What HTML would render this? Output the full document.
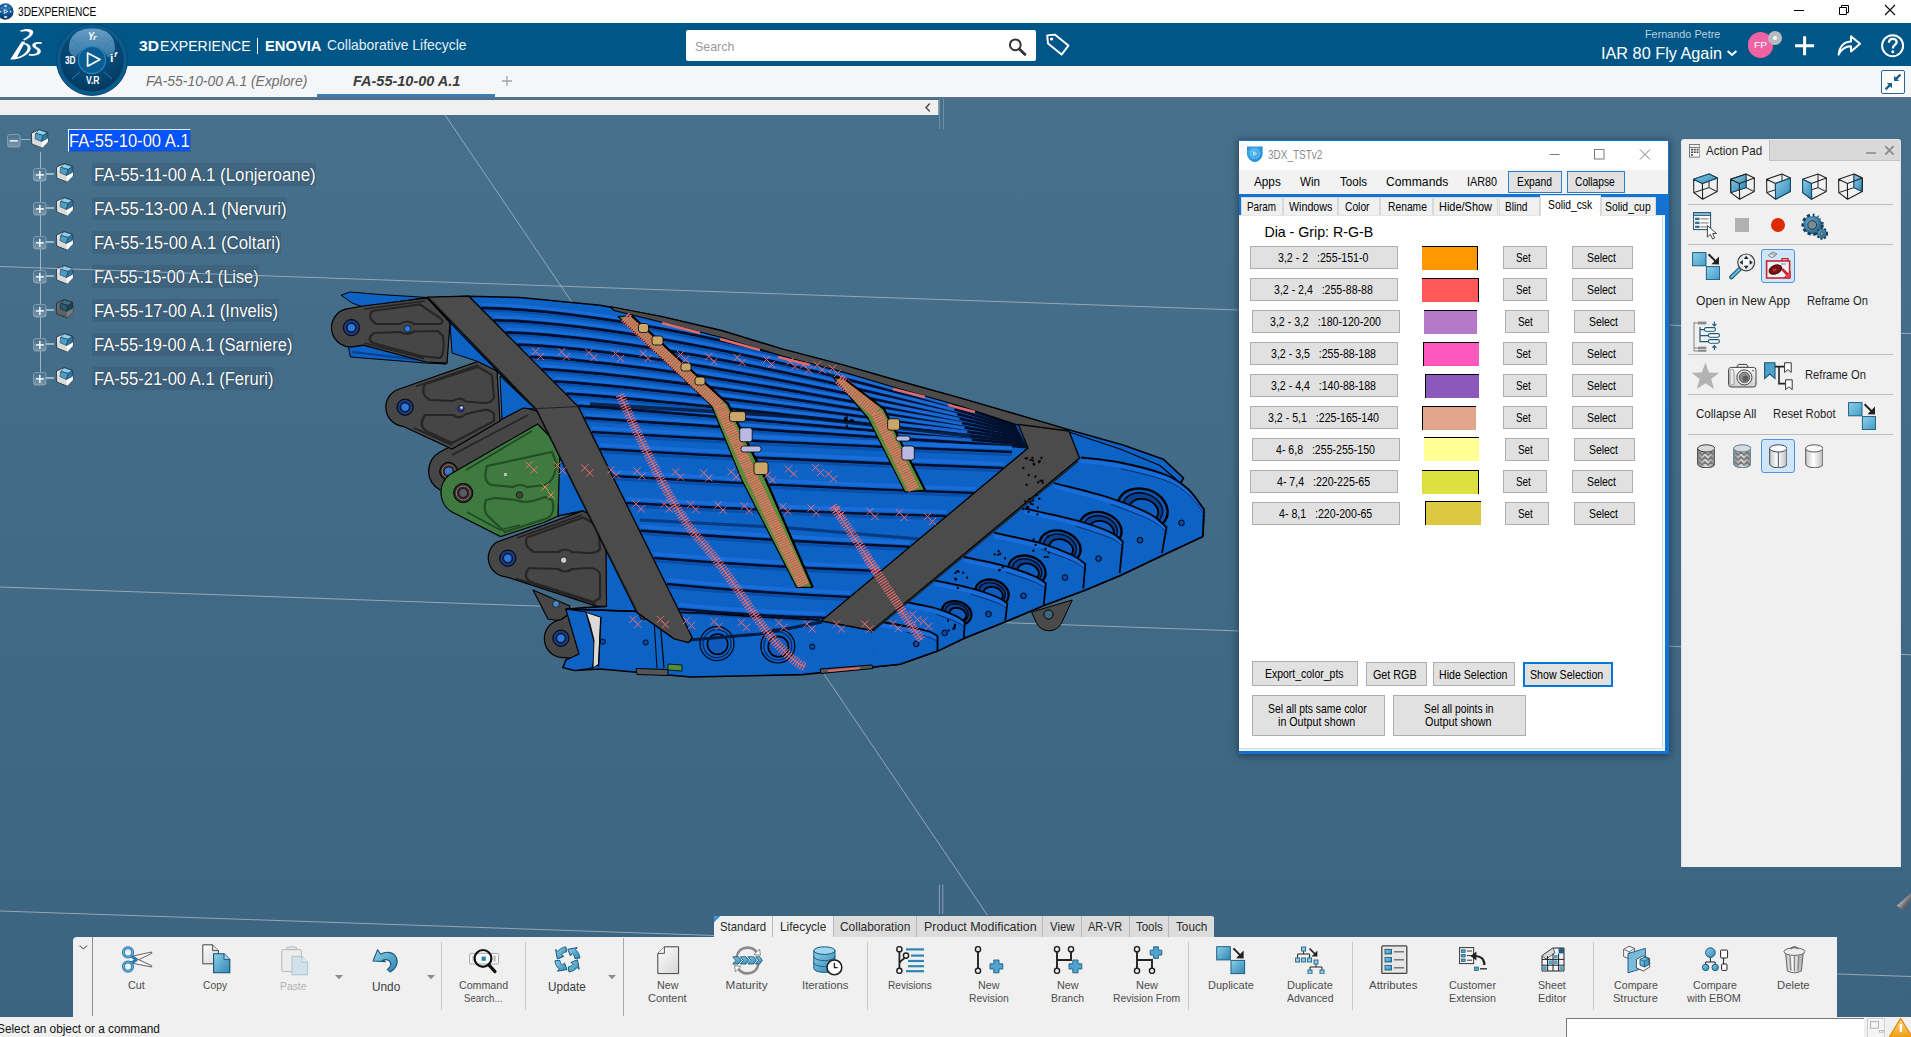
<!DOCTYPE html>
<html><head><meta charset="utf-8">
<style>
*{box-sizing:border-box;margin:0;padding:0}
html,body{width:1911px;height:1037px;overflow:hidden;background:#fff;font-family:"Liberation Sans",sans-serif;}
#root{position:relative;width:1911px;height:1037px;overflow:hidden;background:#fff}
</style></head><body>
<div id="root">
<!-- view -->
<div style="position:absolute;left:0px;top:98px;width:1911px;height:919px;background:linear-gradient(#47708c,#3c6480);"></div>
<div style="position:absolute;left:0px;top:99.6px;width:939px;height:15px;background:#f0f0f0;border-right:1px solid #8a9aa6;"></div>
<div style="position:absolute;left:942.6px;top:98px;width:1.2px;height:31px;background:#6f8fa6;"></div>
<div style="position:absolute;left:939px;top:98px;width:1.2px;height:31px;background:#6f8fa6;"></div>
<svg style="position:absolute;left:923px;top:102px" width="10" height="11" viewBox="0 0 10 11"><path d="M6.8 1.4 L3 5.5 L6.8 9.6" fill="none" stroke="#4a4a4a" stroke-width="1.4"/></svg>
<div style="position:absolute;left:0px;top:1017px;width:1911px;height:20px;background:#f0f0f0;"></div>
<span style="position:absolute;left:-3.0px;top:1022.8px;font-size:12px;line-height:1;color:#111;white-space:pre;transform-origin:0 0;transform:scaleX(0.985);">Select an object or a command</span>
<!-- tree -->
<div style="position:absolute;left:40px;top:152px;width:1.2px;height:16px;background:#9fb6c6;"></div>
<div style="position:absolute;left:40px;top:181.1px;width:1.2px;height:20.9px;background:#9fb6c6;"></div>
<div style="position:absolute;left:40px;top:215.1px;width:1.2px;height:20.9px;background:#9fb6c6;"></div>
<div style="position:absolute;left:40px;top:249.1px;width:1.2px;height:20.9px;background:#9fb6c6;"></div>
<div style="position:absolute;left:40px;top:283.1px;width:1.2px;height:20.9px;background:#9fb6c6;"></div>
<div style="position:absolute;left:40px;top:317.1px;width:1.2px;height:20.9px;background:#9fb6c6;"></div>
<div style="position:absolute;left:40px;top:351.1px;width:1.2px;height:20.9px;background:#9fb6c6;"></div>
<div style="position:absolute;left:21px;top:139.2px;width:9px;height:1.2px;background:#9fb6c6;"></div>
<svg style="position:absolute;left:7px;top:134px" width="14" height="14" viewBox="0 0 14 14"><defs><linearGradient id="pmg" x1="0" y1="0" x2="0" y2="1"><stop offset="0" stop-color="#fff" stop-opacity="0"/><stop offset="1" stop-color="#fff" stop-opacity="0.28"/></linearGradient></defs><rect x="0.6" y="0.6" width="12.4" height="12.4" rx="2" fill="url(#pmg)" stroke="#9db4c4" stroke-width="0.9" stroke-opacity="0.8"/><path d="M2.8 6.9 H10.9" stroke="#fff" stroke-width="1.4"/></svg>
<svg style="position:absolute;left:31px;top:128.8px" width="18" height="20" viewBox="0 0 18 20"><path d="M0.5 4.2 L8.1 0.5 L16.7 3.4 L16.9 12.9 L11.1 18.9 L0.8 14.9 Z" fill="#ececec" stroke="#16242e" stroke-width="0.8"/><path d="M10.4 12.6 L16.9 8.6 L16.9 12.9 L11.1 18.9 Z" fill="#ffffff"/><path d="M2.6 3.4 L4.7 4.4 L4.1 9.9 L10.4 12.6 L11 18.6 L2.2 15 Z" fill="#c9cdd0" opacity="0.55"/><path d="M8.1 0.8 L16.3 3.5 L12.2 6.4 L4.7 4.4 Z" fill="#8fd0ee" stroke="#12384f" stroke-width="0.6" stroke-linejoin="round"/><path d="M4.7 4.4 L12.2 6.4 L10.5 12.5 L4.1 9.8 Z" fill="#4f9cc4" stroke="#12384f" stroke-width="0.6" stroke-linejoin="round"/><path d="M12.2 6.4 L16.3 3.5 L16.3 9.4 L10.5 12.5 Z" fill="#2f7ba6" stroke="#12384f" stroke-width="0.6" stroke-linejoin="round"/></svg>
<div style="position:absolute;left:67.9px;top:128.8px;width:123.6px;height:23.6px;background:#0055ff;border-left:1.3px solid #fff;border-top:1px solid #dfe8ff;border-bottom:1px solid #3b5f86;border-right:1px solid #3b5f86;"></div>
<span style="position:absolute;left:69.0px;top:131.9px;font-size:18px;line-height:1;color:#fff;white-space:pre;transform-origin:0 0;transform:scaleX(0.920);text-shadow:0 0 1px rgba(0,0,40,.6);">FA-55-10-00 A.1</span>
<div style="position:absolute;left:46.3px;top:173.4px;width:8px;height:1.2px;background:#9fb6c6;"></div>
<svg style="position:absolute;left:33px;top:168.1px" width="14" height="14" viewBox="0 0 14 14"><defs><linearGradient id="pmg" x1="0" y1="0" x2="0" y2="1"><stop offset="0" stop-color="#fff" stop-opacity="0"/><stop offset="1" stop-color="#fff" stop-opacity="0.28"/></linearGradient></defs><rect x="0.6" y="0.6" width="12.4" height="12.4" rx="2" fill="url(#pmg)" stroke="#9db4c4" stroke-width="0.9" stroke-opacity="0.8"/><path d="M2.8 6.9 H10.9" stroke="#fff" stroke-width="1.4"/><path d="M6.85 2.8 V10.9" stroke="#fff" stroke-width="1.4"/></svg>
<svg style="position:absolute;left:56px;top:163.1px" width="18" height="20" viewBox="0 0 18 20"><path d="M0.5 4.2 L8.1 0.5 L16.7 3.4 L16.9 12.9 L11.1 18.9 L0.8 14.9 Z" fill="#ececec" stroke="#16242e" stroke-width="0.8"/><path d="M10.4 12.6 L16.9 8.6 L16.9 12.9 L11.1 18.9 Z" fill="#ffffff"/><path d="M2.6 3.4 L4.7 4.4 L4.1 9.9 L10.4 12.6 L11 18.6 L2.2 15 Z" fill="#c9cdd0" opacity="0.55"/><path d="M8.1 0.8 L16.3 3.5 L12.2 6.4 L4.7 4.4 Z" fill="#8fd0ee" stroke="#12384f" stroke-width="0.6" stroke-linejoin="round"/><path d="M4.7 4.4 L12.2 6.4 L10.5 12.5 L4.1 9.8 Z" fill="#4f9cc4" stroke="#12384f" stroke-width="0.6" stroke-linejoin="round"/><path d="M12.2 6.4 L16.3 3.5 L16.3 9.4 L10.5 12.5 Z" fill="#2f7ba6" stroke="#12384f" stroke-width="0.6" stroke-linejoin="round"/></svg>
<div style="position:absolute;left:92px;top:163.2px;width:224.29999999999998px;height:23.3px;background:rgba(30,50,70,0.16);"></div>
<span style="position:absolute;left:94.1px;top:165.6px;font-size:18px;line-height:1;color:#fff;white-space:pre;transform-origin:0 0;transform:scaleX(0.936);text-shadow:0 0 1.2px rgba(0,10,30,.75);">FA-55-11-00 A.1 (Lonjeroane)</span>
<div style="position:absolute;left:46.3px;top:207.4px;width:8px;height:1.2px;background:#9fb6c6;"></div>
<svg style="position:absolute;left:33px;top:202.1px" width="14" height="14" viewBox="0 0 14 14"><defs><linearGradient id="pmg" x1="0" y1="0" x2="0" y2="1"><stop offset="0" stop-color="#fff" stop-opacity="0"/><stop offset="1" stop-color="#fff" stop-opacity="0.28"/></linearGradient></defs><rect x="0.6" y="0.6" width="12.4" height="12.4" rx="2" fill="url(#pmg)" stroke="#9db4c4" stroke-width="0.9" stroke-opacity="0.8"/><path d="M2.8 6.9 H10.9" stroke="#fff" stroke-width="1.4"/><path d="M6.85 2.8 V10.9" stroke="#fff" stroke-width="1.4"/></svg>
<svg style="position:absolute;left:56px;top:197.1px" width="18" height="20" viewBox="0 0 18 20"><path d="M0.5 4.2 L8.1 0.5 L16.7 3.4 L16.9 12.9 L11.1 18.9 L0.8 14.9 Z" fill="#ececec" stroke="#16242e" stroke-width="0.8"/><path d="M10.4 12.6 L16.9 8.6 L16.9 12.9 L11.1 18.9 Z" fill="#ffffff"/><path d="M2.6 3.4 L4.7 4.4 L4.1 9.9 L10.4 12.6 L11 18.6 L2.2 15 Z" fill="#c9cdd0" opacity="0.55"/><path d="M8.1 0.8 L16.3 3.5 L12.2 6.4 L4.7 4.4 Z" fill="#8fd0ee" stroke="#12384f" stroke-width="0.6" stroke-linejoin="round"/><path d="M4.7 4.4 L12.2 6.4 L10.5 12.5 L4.1 9.8 Z" fill="#4f9cc4" stroke="#12384f" stroke-width="0.6" stroke-linejoin="round"/><path d="M12.2 6.4 L16.3 3.5 L16.3 9.4 L10.5 12.5 Z" fill="#2f7ba6" stroke="#12384f" stroke-width="0.6" stroke-linejoin="round"/></svg>
<div style="position:absolute;left:92px;top:197.2px;width:195.29999999999998px;height:23.3px;background:rgba(30,50,70,0.16);"></div>
<span style="position:absolute;left:94.1px;top:199.6px;font-size:18px;line-height:1;color:#fff;white-space:pre;transform-origin:0 0;transform:scaleX(0.935);text-shadow:0 0 1.2px rgba(0,10,30,.75);">FA-55-13-00 A.1 (Nervuri)</span>
<div style="position:absolute;left:46.3px;top:241.4px;width:8px;height:1.2px;background:#9fb6c6;"></div>
<svg style="position:absolute;left:33px;top:236.1px" width="14" height="14" viewBox="0 0 14 14"><defs><linearGradient id="pmg" x1="0" y1="0" x2="0" y2="1"><stop offset="0" stop-color="#fff" stop-opacity="0"/><stop offset="1" stop-color="#fff" stop-opacity="0.28"/></linearGradient></defs><rect x="0.6" y="0.6" width="12.4" height="12.4" rx="2" fill="url(#pmg)" stroke="#9db4c4" stroke-width="0.9" stroke-opacity="0.8"/><path d="M2.8 6.9 H10.9" stroke="#fff" stroke-width="1.4"/><path d="M6.85 2.8 V10.9" stroke="#fff" stroke-width="1.4"/></svg>
<svg style="position:absolute;left:56px;top:231.1px" width="18" height="20" viewBox="0 0 18 20"><path d="M0.5 4.2 L8.1 0.5 L16.7 3.4 L16.9 12.9 L11.1 18.9 L0.8 14.9 Z" fill="#ececec" stroke="#16242e" stroke-width="0.8"/><path d="M10.4 12.6 L16.9 8.6 L16.9 12.9 L11.1 18.9 Z" fill="#ffffff"/><path d="M2.6 3.4 L4.7 4.4 L4.1 9.9 L10.4 12.6 L11 18.6 L2.2 15 Z" fill="#c9cdd0" opacity="0.55"/><path d="M8.1 0.8 L16.3 3.5 L12.2 6.4 L4.7 4.4 Z" fill="#8fd0ee" stroke="#12384f" stroke-width="0.6" stroke-linejoin="round"/><path d="M4.7 4.4 L12.2 6.4 L10.5 12.5 L4.1 9.8 Z" fill="#4f9cc4" stroke="#12384f" stroke-width="0.6" stroke-linejoin="round"/><path d="M12.2 6.4 L16.3 3.5 L16.3 9.4 L10.5 12.5 Z" fill="#2f7ba6" stroke="#12384f" stroke-width="0.6" stroke-linejoin="round"/></svg>
<div style="position:absolute;left:92px;top:231.2px;width:189.29999999999998px;height:23.3px;background:rgba(30,50,70,0.16);"></div>
<span style="position:absolute;left:94.1px;top:233.6px;font-size:18px;line-height:1;color:#fff;white-space:pre;transform-origin:0 0;transform:scaleX(0.933);text-shadow:0 0 1.2px rgba(0,10,30,.75);">FA-55-15-00 A.1 (Coltari)</span>
<div style="position:absolute;left:46.3px;top:275.4px;width:8px;height:1.2px;background:#9fb6c6;"></div>
<svg style="position:absolute;left:33px;top:270.1px" width="14" height="14" viewBox="0 0 14 14"><defs><linearGradient id="pmg" x1="0" y1="0" x2="0" y2="1"><stop offset="0" stop-color="#fff" stop-opacity="0"/><stop offset="1" stop-color="#fff" stop-opacity="0.28"/></linearGradient></defs><rect x="0.6" y="0.6" width="12.4" height="12.4" rx="2" fill="url(#pmg)" stroke="#9db4c4" stroke-width="0.9" stroke-opacity="0.8"/><path d="M2.8 6.9 H10.9" stroke="#fff" stroke-width="1.4"/><path d="M6.85 2.8 V10.9" stroke="#fff" stroke-width="1.4"/></svg>
<svg style="position:absolute;left:56px;top:265.1px" width="18" height="20" viewBox="0 0 18 20"><path d="M0.5 4.2 L8.1 0.5 L16.7 3.4 L16.9 12.9 L11.1 18.9 L0.8 14.9 Z" fill="#ececec" stroke="#16242e" stroke-width="0.8"/><path d="M10.4 12.6 L16.9 8.6 L16.9 12.9 L11.1 18.9 Z" fill="#ffffff"/><path d="M2.6 3.4 L4.7 4.4 L4.1 9.9 L10.4 12.6 L11 18.6 L2.2 15 Z" fill="#c9cdd0" opacity="0.55"/><path d="M8.1 0.8 L16.3 3.5 L12.2 6.4 L4.7 4.4 Z" fill="#8fd0ee" stroke="#12384f" stroke-width="0.6" stroke-linejoin="round"/><path d="M4.7 4.4 L12.2 6.4 L10.5 12.5 L4.1 9.8 Z" fill="#4f9cc4" stroke="#12384f" stroke-width="0.6" stroke-linejoin="round"/><path d="M12.2 6.4 L16.3 3.5 L16.3 9.4 L10.5 12.5 Z" fill="#2f7ba6" stroke="#12384f" stroke-width="0.6" stroke-linejoin="round"/></svg>
<div style="position:absolute;left:92px;top:265.2px;width:167.4px;height:23.3px;background:rgba(30,50,70,0.16);"></div>
<span style="position:absolute;left:94.1px;top:267.6px;font-size:18px;line-height:1;color:#fff;white-space:pre;transform-origin:0 0;transform:scaleX(0.909);text-shadow:0 0 1.2px rgba(0,10,30,.75);">FA-55-15-00 A.1 (Lise)</span>
<div style="position:absolute;left:46.3px;top:309.4px;width:8px;height:1.2px;background:#9fb6c6;"></div>
<svg style="position:absolute;left:33px;top:304.1px" width="14" height="14" viewBox="0 0 14 14"><defs><linearGradient id="pmg" x1="0" y1="0" x2="0" y2="1"><stop offset="0" stop-color="#fff" stop-opacity="0"/><stop offset="1" stop-color="#fff" stop-opacity="0.28"/></linearGradient></defs><rect x="0.6" y="0.6" width="12.4" height="12.4" rx="2" fill="url(#pmg)" stroke="#9db4c4" stroke-width="0.9" stroke-opacity="0.8"/><path d="M2.8 6.9 H10.9" stroke="#fff" stroke-width="1.4"/><path d="M6.85 2.8 V10.9" stroke="#fff" stroke-width="1.4"/></svg>
<svg style="position:absolute;left:56px;top:299.1px" width="18" height="20" viewBox="0 0 18 20"><rect x="0" y="0.5" width="18" height="19" fill="#4d6a7d" opacity="0.7"/><path d="M0.5 4.2 L8.1 0.5 L16.7 3.4 L16.9 12.9 L11.1 18.9 L0.8 14.9 Z" fill="#6a6f73" stroke="#16242e" stroke-width="0.8"/><path d="M10.4 12.6 L16.9 8.6 L16.9 12.9 L11.1 18.9 Z" fill="#777c80"/><path d="M2.6 3.4 L4.7 4.4 L4.1 9.9 L10.4 12.6 L11 18.6 L2.2 15 Z" fill="#50555a" opacity="0.55"/><path d="M8.1 0.8 L16.3 3.5 L12.2 6.4 L4.7 4.4 Z" fill="#3f6e86" stroke="#1c2a33" stroke-width="0.6" stroke-linejoin="round"/><path d="M4.7 4.4 L12.2 6.4 L10.5 12.5 L4.1 9.8 Z" fill="#2b566e" stroke="#1c2a33" stroke-width="0.6" stroke-linejoin="round"/><path d="M12.2 6.4 L16.3 3.5 L16.3 9.4 L10.5 12.5 Z" fill="#1e4459" stroke="#1c2a33" stroke-width="0.6" stroke-linejoin="round"/></svg>
<div style="position:absolute;left:92px;top:299.2px;width:186.6px;height:23.3px;background:rgba(30,50,70,0.16);"></div>
<span style="position:absolute;left:94.1px;top:301.6px;font-size:18px;line-height:1;color:#fff;white-space:pre;transform-origin:0 0;transform:scaleX(0.924);text-shadow:0 0 1.2px rgba(0,10,30,.75);">FA-55-17-00 A.1 (Invelis)</span>
<div style="position:absolute;left:46.3px;top:343.4px;width:8px;height:1.2px;background:#9fb6c6;"></div>
<svg style="position:absolute;left:33px;top:338.1px" width="14" height="14" viewBox="0 0 14 14"><defs><linearGradient id="pmg" x1="0" y1="0" x2="0" y2="1"><stop offset="0" stop-color="#fff" stop-opacity="0"/><stop offset="1" stop-color="#fff" stop-opacity="0.28"/></linearGradient></defs><rect x="0.6" y="0.6" width="12.4" height="12.4" rx="2" fill="url(#pmg)" stroke="#9db4c4" stroke-width="0.9" stroke-opacity="0.8"/><path d="M2.8 6.9 H10.9" stroke="#fff" stroke-width="1.4"/><path d="M6.85 2.8 V10.9" stroke="#fff" stroke-width="1.4"/></svg>
<svg style="position:absolute;left:56px;top:333.1px" width="18" height="20" viewBox="0 0 18 20"><path d="M0.5 4.2 L8.1 0.5 L16.7 3.4 L16.9 12.9 L11.1 18.9 L0.8 14.9 Z" fill="#ececec" stroke="#16242e" stroke-width="0.8"/><path d="M10.4 12.6 L16.9 8.6 L16.9 12.9 L11.1 18.9 Z" fill="#ffffff"/><path d="M2.6 3.4 L4.7 4.4 L4.1 9.9 L10.4 12.6 L11 18.6 L2.2 15 Z" fill="#c9cdd0" opacity="0.55"/><path d="M8.1 0.8 L16.3 3.5 L12.2 6.4 L4.7 4.4 Z" fill="#8fd0ee" stroke="#12384f" stroke-width="0.6" stroke-linejoin="round"/><path d="M4.7 4.4 L12.2 6.4 L10.5 12.5 L4.1 9.8 Z" fill="#4f9cc4" stroke="#12384f" stroke-width="0.6" stroke-linejoin="round"/><path d="M12.2 6.4 L16.3 3.5 L16.3 9.4 L10.5 12.5 Z" fill="#2f7ba6" stroke="#12384f" stroke-width="0.6" stroke-linejoin="round"/></svg>
<div style="position:absolute;left:92px;top:333.2px;width:201.20000000000002px;height:23.3px;background:rgba(30,50,70,0.16);"></div>
<span style="position:absolute;left:94.1px;top:335.6px;font-size:18px;line-height:1;color:#fff;white-space:pre;transform-origin:0 0;transform:scaleX(0.918);text-shadow:0 0 1.2px rgba(0,10,30,.75);">FA-55-19-00 A.1 (Sarniere)</span>
<div style="position:absolute;left:46.3px;top:377.4px;width:8px;height:1.2px;background:#9fb6c6;"></div>
<svg style="position:absolute;left:33px;top:372.1px" width="14" height="14" viewBox="0 0 14 14"><defs><linearGradient id="pmg" x1="0" y1="0" x2="0" y2="1"><stop offset="0" stop-color="#fff" stop-opacity="0"/><stop offset="1" stop-color="#fff" stop-opacity="0.28"/></linearGradient></defs><rect x="0.6" y="0.6" width="12.4" height="12.4" rx="2" fill="url(#pmg)" stroke="#9db4c4" stroke-width="0.9" stroke-opacity="0.8"/><path d="M2.8 6.9 H10.9" stroke="#fff" stroke-width="1.4"/><path d="M6.85 2.8 V10.9" stroke="#fff" stroke-width="1.4"/></svg>
<svg style="position:absolute;left:56px;top:367.1px" width="18" height="20" viewBox="0 0 18 20"><path d="M0.5 4.2 L8.1 0.5 L16.7 3.4 L16.9 12.9 L11.1 18.9 L0.8 14.9 Z" fill="#ececec" stroke="#16242e" stroke-width="0.8"/><path d="M10.4 12.6 L16.9 8.6 L16.9 12.9 L11.1 18.9 Z" fill="#ffffff"/><path d="M2.6 3.4 L4.7 4.4 L4.1 9.9 L10.4 12.6 L11 18.6 L2.2 15 Z" fill="#c9cdd0" opacity="0.55"/><path d="M8.1 0.8 L16.3 3.5 L12.2 6.4 L4.7 4.4 Z" fill="#8fd0ee" stroke="#12384f" stroke-width="0.6" stroke-linejoin="round"/><path d="M4.7 4.4 L12.2 6.4 L10.5 12.5 L4.1 9.8 Z" fill="#4f9cc4" stroke="#12384f" stroke-width="0.6" stroke-linejoin="round"/><path d="M12.2 6.4 L16.3 3.5 L16.3 9.4 L10.5 12.5 Z" fill="#2f7ba6" stroke="#12384f" stroke-width="0.6" stroke-linejoin="round"/></svg>
<div style="position:absolute;left:92px;top:367.2px;width:182.1px;height:23.3px;background:rgba(30,50,70,0.16);"></div>
<span style="position:absolute;left:94.1px;top:369.6px;font-size:18px;line-height:1;color:#fff;white-space:pre;transform-origin:0 0;transform:scaleX(0.920);text-shadow:0 0 1.2px rgba(0,10,30,.75);">FA-55-21-00 A.1 (Feruri)</span>
<!-- model -->
<svg style="position:absolute;left:0;top:0" width="1911" height="1037" viewBox="0 0 1911 1037">
<path d="M0.0 266.5 L1911.0 333.6" fill="none" stroke="#a9bccb" stroke-width="0.9" opacity="0.85"/>
<path d="M0.0 587.0 L1911.0 654.8" fill="none" stroke="#a9bccb" stroke-width="0.9" opacity="0.85"/>
<path d="M445.0 115.0 L987.3 915.0" fill="none" stroke="#a9bccb" stroke-width="0.9" opacity="0.85"/>
<path d="M0.0 911.0 L1911.0 976.5" fill="none" stroke="#a9bccb" stroke-width="0.9" opacity="0.85"/>
<path d="M939.4 884.5 L939.4 914.0" fill="none" stroke="#a9bccb" stroke-width="0.9" opacity="0.8"/>
<path d="M942.8 884.5 L942.8 914.0" fill="none" stroke="#a9bccb" stroke-width="0.9" opacity="0.8"/>
<defs><linearGradient id="cone" x1="0" y1="0" x2="1" y2="1"><stop offset="0.2" stop-color="#e8e8e8"/><stop offset="0.6" stop-color="#6a6a6a"/><stop offset="1" stop-color="#303030"/></linearGradient></defs><path d="M1896.8 905.7 L1911 893.2 L1911 898 L1904.2 911.2 Z" fill="url(#cone)"/>
<path d="M468.9 296.2 L520.0 297.5 L600.0 305.3 L661.0 316.5 L721.5 330.6 L782.0 349.0 L843.0 365.0 L900.0 381.3 L960.0 398.0 L1017.5 414.7 L1066.0 429.0 L1123.0 445.0 L1163.3 459.2 L1183.5 478.0 L1180.5 483.5 L1192.0 495.0 L1204.0 509.5 L1202.8 536.5 L1163.3 555.0 L1120.8 575.2 L1084.3 590.4 L1043.8 605.6 L1005.3 621.8 L964.8 638.0 L937.5 651.1 L900.0 664.3 L873.4 667.0 L802.5 674.6 L691.0 677.0 L600.0 669.0 L575.0 670.5 L563.0 667.5 L566.0 660.0 L579.0 654.0 L565.7 608.8 L605.5 606.4 L605.5 546.0 L582.6 511.0 L558.0 516.0 L558.4 447.0 L535.7 408.6 L498.0 372.0 L449.6 322.5 L427.3 298.0 Z" fill="#0c62c5" stroke="#000" stroke-width="1.6" stroke-linejoin="round" />
<path d="M341.0 295.2 L350.0 292.0 L380.0 294.5 L427.3 297.5 L363.0 307.0 L352.0 303.0 Z" fill="#0c62c5" stroke="#000" stroke-width="1" stroke-linejoin="round" />
<path d="M348.4 346.8 L350.4 357.0 L425.3 363.0 L446.0 364.0 L420.0 357.0 L363.0 345.0 Z" fill="#0c62c5" stroke="#000" stroke-width="1" stroke-linejoin="round" />
<path d="M352.0 352.0 L430.0 361.0" fill="none" stroke="#0a3f8c" stroke-width="2" />
<path d="M481.6 304.6 L503.8 305.3 L526.1 306.8 L548.4 308.8 L570.7 311.3 L592.9 314.2 L615.2 317.4 L637.5 321.0 L659.7 324.9 L682.0 329.2 L704.3 333.7 L726.5 338.5 L748.8 343.5 L771.1 348.8 L793.3 354.4 L815.6 360.2 L837.9 366.3 L860.1 372.6 L882.4 379.1 L904.7 385.8 L926.9 392.7 L949.2 399.9" fill="none" stroke="#1b6fdd" stroke-width="3.0" opacity="0.9"/>
<path d="M481.6 308.0 L503.8 308.7 L526.1 310.2 L548.4 312.2 L570.7 314.7 L592.9 317.6 L615.2 320.8 L637.5 324.4 L659.7 328.3 L682.0 332.6 L704.3 337.1 L726.5 341.9 L748.8 346.9 L771.1 352.2 L793.3 357.8 L815.6 363.6 L837.9 369.7 L860.1 376.0 L882.4 382.5 L904.7 389.2 L926.9 396.1 L949.2 403.3 L971.5 410.7 L993.7 418.2 L1016.0 426.0" fill="none" stroke="#020f2c" stroke-width="2.8" />
<path d="M481.6 310.6 L503.8 311.3 L526.1 312.8 L548.4 314.8 L570.7 317.3 L592.9 320.2 L615.2 323.4 L637.5 327.0 L659.7 330.9 L682.0 335.2 L704.3 339.7 L726.5 344.5 L748.8 349.5 L771.1 354.8 L793.3 360.4 L815.6 366.2 L837.9 372.3 L860.1 378.6 L882.4 385.1 L904.7 391.8 L926.9 398.7 L949.2 405.9 L971.5 413.3" fill="none" stroke="#0a4eaa" stroke-width="2.0" />
<path d="M493.7 316.8 L515.5 317.6 L537.3 319.2 L559.1 321.3 L580.9 323.8 L602.8 326.6 L624.6 329.7 L646.4 333.2 L668.2 336.9 L690.0 340.9 L711.8 345.1 L733.6 349.5 L755.5 354.2 L777.3 359.0 L799.1 364.1 L820.9 369.4 L842.7 374.9 L864.5 380.5 L886.3 386.4 L908.2 392.4 L930.0 398.6 L951.8 404.9" fill="none" stroke="#1b6fdd" stroke-width="3.0" opacity="0.9"/>
<path d="M493.7 320.2 L515.5 321.0 L537.3 322.6 L559.1 324.7 L580.9 327.2 L602.8 330.0 L624.6 333.1 L646.4 336.6 L668.2 340.3 L690.0 344.3 L711.8 348.5 L733.6 352.9 L755.5 357.6 L777.3 362.4 L799.1 367.5 L820.9 372.8 L842.7 378.3 L864.5 383.9 L886.3 389.8 L908.2 395.8 L930.0 402.0 L951.8 408.3 L973.6 414.8 L995.4 421.5 L1017.2 428.3" fill="none" stroke="#020f2c" stroke-width="2.8" />
<path d="M493.7 322.8 L515.5 323.6 L537.3 325.2 L559.1 327.3 L580.9 329.8 L602.8 332.6 L624.6 335.7 L646.4 339.2 L668.2 342.9 L690.0 346.9 L711.8 351.1 L733.6 355.5 L755.5 360.2 L777.3 365.0 L799.1 370.1 L820.9 375.4 L842.7 380.9 L864.5 386.5 L886.3 392.4 L908.2 398.4 L930.0 404.6 L951.8 410.9 L973.6 417.4" fill="none" stroke="#0a4eaa" stroke-width="2.0" />
<path d="M505.8 329.0 L527.1 330.0 L548.5 331.6 L569.9 333.7 L591.2 336.1 L612.6 338.9 L633.9 341.9 L655.3 345.2 L676.7 348.7 L698.0 352.3 L719.4 356.2 L740.8 360.3 L762.1 364.6 L783.5 369.0 L804.8 373.6 L826.2 378.3 L847.6 383.2 L868.9 388.3 L890.3 393.5 L911.6 398.8 L933.0 404.2 L954.4 409.8" fill="none" stroke="#1b6fdd" stroke-width="3.0" opacity="0.9"/>
<path d="M505.8 332.4 L527.1 333.4 L548.5 335.0 L569.9 337.1 L591.2 339.5 L612.6 342.3 L633.9 345.3 L655.3 348.6 L676.7 352.1 L698.0 355.7 L719.4 359.6 L740.8 363.7 L762.1 368.0 L783.5 372.4 L804.8 377.0 L826.2 381.7 L847.6 386.6 L868.9 391.7 L890.3 396.9 L911.6 402.2 L933.0 407.6 L954.4 413.2 L975.7 418.9 L997.1 424.7 L1018.4 430.7" fill="none" stroke="#020f2c" stroke-width="2.8" />
<path d="M505.8 335.0 L527.1 336.0 L548.5 337.6 L569.9 339.7 L591.2 342.1 L612.6 344.9 L633.9 347.9 L655.3 351.2 L676.7 354.7 L698.0 358.3 L719.4 362.2 L740.8 366.3 L762.1 370.6 L783.5 375.0 L804.8 379.6 L826.2 384.3 L847.6 389.2 L868.9 394.3 L890.3 399.5 L911.6 404.8 L933.0 410.2 L954.4 415.8 L975.7 421.5" fill="none" stroke="#0a4eaa" stroke-width="2.0" />
<path d="M517.9 341.3 L538.8 342.3 L559.7 344.0 L580.6 346.1 L601.5 348.5 L622.4 351.1 L643.3 354.0 L664.2 357.0 L685.1 360.2 L706.1 363.6 L727.0 367.2 L747.9 370.9 L768.8 374.7 L789.7 378.7 L810.6 382.8 L831.5 387.0 L852.4 391.3 L873.3 395.8 L894.2 400.3 L915.1 405.0 L936.0 409.7 L956.9 414.5" fill="none" stroke="#1b6fdd" stroke-width="3.0" opacity="0.9"/>
<path d="M517.9 344.7 L538.8 345.7 L559.7 347.4 L580.6 349.5 L601.5 351.9 L622.4 354.5 L643.3 357.4 L664.2 360.4 L685.1 363.6 L706.1 367.0 L727.0 370.6 L747.9 374.3 L768.8 378.1 L789.7 382.1 L810.6 386.2 L831.5 390.4 L852.4 394.7 L873.3 399.2 L894.2 403.7 L915.1 408.4 L936.0 413.1 L956.9 417.9 L977.9 422.9 L998.8 427.9 L1019.7 433.0" fill="none" stroke="#020f2c" stroke-width="2.8" />
<path d="M517.9 347.3 L538.8 348.3 L559.7 350.0 L580.6 352.1 L601.5 354.5 L622.4 357.1 L643.3 360.0 L664.2 363.0 L685.1 366.2 L706.1 369.6 L727.0 373.2 L747.9 376.9 L768.8 380.7 L789.7 384.7 L810.6 388.8 L831.5 393.0 L852.4 397.3 L873.3 401.8 L894.2 406.3 L915.1 411.0 L936.0 415.7 L956.9 420.5 L977.9 425.5" fill="none" stroke="#0a4eaa" stroke-width="2.0" />
<path d="M530.0 353.5 L550.4 354.6 L570.9 356.3 L591.3 358.4 L611.8 360.7 L632.3 363.2 L652.7 365.8 L673.2 368.7 L693.6 371.6 L714.1 374.7 L734.5 377.9 L755.0 381.2 L775.4 384.6 L795.9 388.1 L816.3 391.7 L836.8 395.4 L857.3 399.2 L877.7 403.0 L898.2 406.9 L918.6 410.9 L939.1 415.0 L959.5 419.1" fill="none" stroke="#1b6fdd" stroke-width="3.0" opacity="0.9"/>
<path d="M530.0 356.9 L550.4 358.0 L570.9 359.7 L591.3 361.8 L611.8 364.1 L632.3 366.6 L652.7 369.2 L673.2 372.1 L693.6 375.0 L714.1 378.1 L734.5 381.3 L755.0 384.6 L775.4 388.0 L795.9 391.5 L816.3 395.1 L836.8 398.8 L857.3 402.6 L877.7 406.4 L898.2 410.3 L918.6 414.3 L939.1 418.4 L959.5 422.5 L980.0 426.7 L1000.4 431.0 L1020.9 435.3" fill="none" stroke="#020f2c" stroke-width="2.8" />
<path d="M530.0 359.5 L550.4 360.6 L570.9 362.3 L591.3 364.4 L611.8 366.7 L632.3 369.2 L652.7 371.8 L673.2 374.7 L693.6 377.6 L714.1 380.7 L734.5 383.9 L755.0 387.2 L775.4 390.6 L795.9 394.1 L816.3 397.7 L836.8 401.4 L857.3 405.2 L877.7 409.0 L898.2 412.9 L918.6 416.9 L939.1 421.0 L959.5 425.1 L980.0 429.3" fill="none" stroke="#0a4eaa" stroke-width="2.0" />
<path d="M542.1 365.7 L562.1 366.9 L582.1 368.7 L602.1 370.6 L622.1 372.8 L642.1 375.1 L662.1 377.6 L682.1 380.1 L702.1 382.8 L722.1 385.5 L742.1 388.3 L762.1 391.2 L782.1 394.2 L802.1 397.2 L822.1 400.3 L842.1 403.5 L862.1 406.7 L882.1 410.0 L902.1 413.3 L922.1 416.7 L942.1 420.1 L962.1 423.6" fill="none" stroke="#1b6fdd" stroke-width="3.0" opacity="0.9"/>
<path d="M542.1 369.1 L562.1 370.3 L582.1 372.1 L602.1 374.0 L622.1 376.2 L642.1 378.5 L662.1 381.0 L682.1 383.5 L702.1 386.2 L722.1 388.9 L742.1 391.7 L762.1 394.6 L782.1 397.6 L802.1 400.6 L822.1 403.7 L842.1 406.9 L862.1 410.1 L882.1 413.4 L902.1 416.7 L922.1 420.1 L942.1 423.5 L962.1 427.0 L982.1 430.5 L1002.1 434.1 L1022.1 437.7" fill="none" stroke="#020f2c" stroke-width="2.8" />
<path d="M542.1 371.7 L562.1 372.9 L582.1 374.7 L602.1 376.6 L622.1 378.8 L642.1 381.1 L662.1 383.6 L682.1 386.1 L702.1 388.8 L722.1 391.5 L742.1 394.3 L762.1 397.2 L782.1 400.2 L802.1 403.2 L822.1 406.3 L842.1 409.5 L862.1 412.7 L882.1 416.0 L902.1 419.3 L922.1 422.7 L942.1 426.1 L962.1 429.6 L982.1 433.1" fill="none" stroke="#0a4eaa" stroke-width="2.0" />
<path d="M554.2 377.9 L573.7 379.2 L593.3 380.9 L612.8 382.8 L632.4 384.8 L651.9 386.9 L671.5 389.0 L691.0 391.3 L710.6 393.6 L730.1 396.0 L749.7 398.5 L769.2 400.9 L788.8 403.5 L808.3 406.0 L827.9 408.7 L847.4 411.3 L867.0 414.0 L886.5 416.7 L906.0 419.5 L925.6 422.3 L945.1 425.1 L964.7 427.9" fill="none" stroke="#1b6fdd" stroke-width="3.0" opacity="0.9"/>
<path d="M554.2 381.3 L573.7 382.6 L593.3 384.3 L612.8 386.2 L632.4 388.2 L651.9 390.3 L671.5 392.4 L691.0 394.7 L710.6 397.0 L730.1 399.4 L749.7 401.9 L769.2 404.3 L788.8 406.9 L808.3 409.4 L827.9 412.1 L847.4 414.7 L867.0 417.4 L886.5 420.1 L906.0 422.9 L925.6 425.7 L945.1 428.5 L964.7 431.3 L984.2 434.2 L1003.8 437.1 L1023.3 440.0" fill="none" stroke="#020f2c" stroke-width="2.8" />
<path d="M554.2 383.9 L573.7 385.2 L593.3 386.9 L612.8 388.8 L632.4 390.8 L651.9 392.9 L671.5 395.0 L691.0 397.3 L710.6 399.6 L730.1 402.0 L749.7 404.5 L769.2 406.9 L788.8 409.5 L808.3 412.0 L827.9 414.7 L847.4 417.3 L867.0 420.0 L886.5 422.7 L906.0 425.5 L925.6 428.3 L945.1 431.1 L964.7 433.9 L984.2 436.8" fill="none" stroke="#0a4eaa" stroke-width="2.0" />
<path d="M566.3 390.2 L585.4 391.5 L604.5 393.1 L623.6 394.8 L642.7 396.6 L661.8 398.4 L680.9 400.3 L699.9 402.2 L719.0 404.2 L738.1 406.2 L757.2 408.2 L776.3 410.3 L795.4 412.4 L814.5 414.5 L833.6 416.6 L852.7 418.8 L871.8 421.0 L890.9 423.2 L910.0 425.4 L929.1 427.6 L948.2 429.8 L967.3 432.1" fill="none" stroke="#1b6fdd" stroke-width="3.0" opacity="0.9"/>
<path d="M566.3 393.6 L585.4 394.9 L604.5 396.5 L623.6 398.2 L642.7 400.0 L661.8 401.8 L680.9 403.7 L699.9 405.6 L719.0 407.6 L738.1 409.6 L757.2 411.6 L776.3 413.7 L795.4 415.8 L814.5 417.9 L833.6 420.0 L852.7 422.2 L871.8 424.4 L890.9 426.6 L910.0 428.8 L929.1 431.0 L948.2 433.2 L967.3 435.5 L986.4 437.8 L1005.5 440.0 L1024.6 442.3" fill="none" stroke="#020f2c" stroke-width="2.8" />
<path d="M566.3 396.2 L585.4 397.5 L604.5 399.1 L623.6 400.8 L642.7 402.6 L661.8 404.4 L680.9 406.3 L699.9 408.2 L719.0 410.2 L738.1 412.2 L757.2 414.2 L776.3 416.3 L795.4 418.4 L814.5 420.5 L833.6 422.6 L852.7 424.8 L871.8 427.0 L890.9 429.2 L910.0 431.4 L929.1 433.6 L948.2 435.8 L967.3 438.1 L986.4 440.4" fill="none" stroke="#0a4eaa" stroke-width="2.0" />
<path d="M578.4 402.4 L597.0 403.7 L615.7 405.1 L634.3 406.6 L653.0 408.1 L671.6 409.7 L690.2 411.2 L708.9 412.8 L727.5 414.4 L746.2 416.0 L764.8 417.7 L783.4 419.3 L802.1 420.9 L820.7 422.6 L839.4 424.3 L858.0 425.9 L876.6 427.6 L895.3 429.3 L913.9 431.0 L932.6 432.7 L951.2 434.4 L969.9 436.1" fill="none" stroke="#1b6fdd" stroke-width="3.0" opacity="0.9"/>
<path d="M578.4 405.8 L597.0 407.1 L615.7 408.5 L634.3 410.0 L653.0 411.5 L671.6 413.1 L690.2 414.6 L708.9 416.2 L727.5 417.8 L746.2 419.4 L764.8 421.1 L783.4 422.7 L802.1 424.3 L820.7 426.0 L839.4 427.7 L858.0 429.3 L876.6 431.0 L895.3 432.7 L913.9 434.4 L932.6 436.1 L951.2 437.8 L969.9 439.5 L988.5 441.2 L1007.1 442.9 L1025.8 444.7" fill="none" stroke="#020f2c" stroke-width="2.8" />
<path d="M578.4 408.4 L597.0 409.7 L615.7 411.1 L634.3 412.6 L653.0 414.1 L671.6 415.7 L690.2 417.2 L708.9 418.8 L727.5 420.4 L746.2 422.0 L764.8 423.7 L783.4 425.3 L802.1 426.9 L820.7 428.6 L839.4 430.3 L858.0 431.9 L876.6 433.6 L895.3 435.3 L913.9 437.0 L932.6 438.7 L951.2 440.4 L969.9 442.1 L988.5 443.8" fill="none" stroke="#0a4eaa" stroke-width="2.0" />
<path d="M584.8 414.6 L603.3 415.8 L621.7 417.0 L640.1 418.2 L658.5 419.4 L676.9 420.6 L695.4 421.9 L713.8 423.1 L732.2 424.3 L750.6 425.5 L769.1 426.7 L787.5 427.9 L805.9 429.1 L824.3 430.3 L842.8 431.5 L861.2 432.7 L879.6 433.9 L898.0 435.1 L916.5 436.4 L934.9 437.6 L953.3 438.8 L971.7 440.0" fill="none" stroke="#1b6fdd" stroke-width="3.0" opacity="0.9"/>
<path d="M584.8 418.0 L603.3 419.2 L621.7 420.4 L640.1 421.6 L658.5 422.8 L676.9 424.0 L695.4 425.2 L713.8 426.5 L732.2 427.7 L750.6 428.9 L769.1 430.1 L787.5 431.3 L805.9 432.5 L824.3 433.7 L842.8 434.9 L861.2 436.1 L879.6 437.3 L898.0 438.5 L916.5 439.8 L934.9 441.0 L953.3 442.2 L971.7 443.4 L990.2 444.6 L1008.6 445.8 L1027.0 447.0" fill="none" stroke="#020f2c" stroke-width="2.8" />
<path d="M584.8 420.6 L603.3 421.8 L621.7 423.0 L640.1 424.2 L658.5 425.4 L676.9 426.6 L695.4 427.9 L713.8 429.1 L732.2 430.3 L750.6 431.5 L769.1 432.7 L787.5 433.9 L805.9 435.1 L824.3 436.3 L842.8 437.5 L861.2 438.7 L879.6 439.9 L898.0 441.1 L916.5 442.4 L934.9 443.6 L953.3 444.8 L971.7 446.0 L990.2 447.2" fill="none" stroke="#0a4eaa" stroke-width="2.0" />
<path d="M591.7 427.8 Q801.9 440.3 1012.0 447.8" fill="none" stroke="#1b6fdd" stroke-width="3.6" opacity="0.9"/>
<path d="M591.7 432.0 Q801.9 444.5 1012.0 452.0" fill="none" stroke="#020f2c" stroke-width="2.6"/>
<path d="M591.7 435.0 Q801.9 447.5 1012.0 455.0" fill="none" stroke="#0a4eaa" stroke-width="2.4"/>
<path d="M600.1 444.8 Q801.6 456.8 1003.0 463.8" fill="none" stroke="#1b6fdd" stroke-width="3.6" opacity="0.9"/>
<path d="M600.1 449.0 Q801.6 461.0 1003.0 468.0" fill="none" stroke="#020f2c" stroke-width="2.6"/>
<path d="M600.1 452.0 Q801.6 464.0 1003.0 471.0" fill="none" stroke="#0a4eaa" stroke-width="2.4"/>
<path d="M613.5 471.8 Q794.2 482.8 975.0 488.8" fill="none" stroke="#1b6fdd" stroke-width="3.6" opacity="0.9"/>
<path d="M613.5 476.0 Q794.2 487.0 975.0 493.0" fill="none" stroke="#020f2c" stroke-width="2.6"/>
<path d="M613.5 479.0 Q794.2 490.0 975.0 496.0" fill="none" stroke="#0a4eaa" stroke-width="2.4"/>
<path d="M626.8 498.8 Q786.4 507.8 946.0 511.8" fill="none" stroke="#1b6fdd" stroke-width="3.6" opacity="0.9"/>
<path d="M626.8 503.0 Q786.4 512.0 946.0 516.0" fill="none" stroke="#020f2c" stroke-width="2.6"/>
<path d="M626.8 506.0 Q786.4 515.0 946.0 519.0" fill="none" stroke="#0a4eaa" stroke-width="2.4"/>
<path d="M640.4 526.4 Q774.7 537.0 909.0 542.6" fill="none" stroke="#1b6fdd" stroke-width="3.6" opacity="0.9"/>
<path d="M640.4 530.6 Q774.7 541.2 909.0 546.8" fill="none" stroke="#020f2c" stroke-width="2.6"/>
<path d="M640.4 533.6 Q774.7 544.2 909.0 549.8" fill="none" stroke="#0a4eaa" stroke-width="2.4"/>
<path d="M654.0 553.8 Q767.0 562.8 880.0 566.8" fill="none" stroke="#1b6fdd" stroke-width="3.6" opacity="0.9"/>
<path d="M654.0 558.0 Q767.0 567.0 880.0 571.0" fill="none" stroke="#020f2c" stroke-width="2.6"/>
<path d="M654.0 561.0 Q767.0 570.0 880.0 574.0" fill="none" stroke="#0a4eaa" stroke-width="2.4"/>
<path d="M666.8 579.8 Q758.4 588.8 850.0 592.8" fill="none" stroke="#1b6fdd" stroke-width="3.6" opacity="0.9"/>
<path d="M666.8 584.0 Q758.4 593.0 850.0 597.0" fill="none" stroke="#020f2c" stroke-width="2.6"/>
<path d="M666.8 587.0 Q758.4 596.0 850.0 600.0" fill="none" stroke="#0a4eaa" stroke-width="2.4"/>
<path d="M679.1 604.8 Q752.1 611.6 825.0 613.5" fill="none" stroke="#1b6fdd" stroke-width="3.6" opacity="0.9"/>
<path d="M679.1 609.0 Q752.1 615.9 825.0 617.7" fill="none" stroke="#020f2c" stroke-width="2.6"/>
<path d="M679.1 612.0 Q752.1 618.9 825.0 620.7" fill="none" stroke="#0a4eaa" stroke-width="2.4"/>
<path d="M590.0 404.0 L800.0 417.0 L1015.0 441.0" fill="none" stroke="#04142f" stroke-width="3.4" opacity="0.8"/>
<path d="M640.0 520.0 L790.0 528.0 L930.0 540.0" fill="none" stroke="#082a66" stroke-width="3" opacity="0.7"/>
<circle cx="717" cy="643.6" r="17" fill="#0c62c5" stroke="#000" stroke-width="1.2"/><circle cx="717" cy="643.6" r="14" fill="none" stroke="#06245c" stroke-width="1.2"/><circle cx="717.6" cy="644.2" r="10.2" fill="#0e5bbd" stroke="#000" stroke-width="1.6"/>
<circle cx="777.8" cy="646" r="17" fill="#0c62c5" stroke="#000" stroke-width="1.2"/><circle cx="777.8" cy="646" r="14" fill="none" stroke="#06245c" stroke-width="1.2"/><circle cx="778.4" cy="646.6" r="10.2" fill="#0e5bbd" stroke="#000" stroke-width="1.6"/>
<circle cx="812.2" cy="646.7" r="2.6" fill="#0b4aa6" stroke="#000" stroke-width="0.9"/>
<circle cx="885.2" cy="649" r="2.6" fill="#0b4aa6" stroke="#000" stroke-width="0.9"/>
<circle cx="645.7" cy="642.5" r="2.6" fill="#0b4aa6" stroke="#000" stroke-width="0.9"/>
<circle cx="602.8" cy="641.7" r="2.6" fill="#0b4aa6" stroke="#000" stroke-width="0.9"/>
<path d="M566.0 609.0 L640.0 611.5 L700.0 613.0 L760.0 617.0 L820.0 620.0" fill="none" stroke="#000" stroke-width="1.3" />
<path d="M690.0 640.0 L760.0 634.0 L822.0 622.0" fill="none" stroke="#031a45" stroke-width="3" />
<path d="M1081.0 457.5 C1087.5 458.3 1106.0 459.7 1120.0 462.5 C1134.0 465.3 1153.7 470.1 1165.0 474.5 C1176.3 478.9 1181.5 483.2 1188.0 489.0 C1194.5 494.8 1201.3 506.1 1204.0 509.5 L1202.8 536.5 L1163.3 555 L1120.8 575.2 L1084.3 590.4 L1043.8 605.6 L1005.3 621.8 L964.8 638 L937.5 651.1 L900 664.3 L873.4 667 L872 630.5 Z" fill="#0c62c5" stroke="none"/>
<path d="M1081.0 461.1 C1087.5 461.9 1106.0 463.3 1120.0 466.1 C1134.0 468.9 1153.7 473.7 1165.0 478.1 C1176.3 482.5 1181.5 486.8 1188.0 492.6 C1194.5 498.4 1201.3 509.7 1204.0 513.1" fill="none" stroke="#1b6fdd" stroke-width="3.6" opacity="0.9"/>
<path d="M1081.0 457.5 C1087.5 458.3 1106.0 459.7 1120.0 462.5 C1134.0 465.3 1153.7 470.1 1165.0 474.5 C1176.3 478.9 1181.5 483.2 1188.0 489.0 C1194.5 494.8 1201.3 506.1 1204.0 509.5 L1202.8 536.5" fill="none" stroke="#000" stroke-width="1.8" stroke-linejoin="round"/>
<path d="M1121.0 468.7 C1128.5 470.7 1154.7 476.3 1166.0 480.7 C1177.3 485.1 1182.5 489.4 1189.0 495.2 C1195.5 501.0 1202.3 512.3 1205.0 515.7" fill="none" stroke="#04225a" stroke-width="1" opacity="0.8"/>
<g transform="rotate(18 1142.6 509)"><ellipse cx="1142.6" cy="509" rx="25.5" ry="20" fill="#0c56b6" stroke="#000" stroke-width="2.4"/><ellipse cx="1142.6" cy="509" rx="20.4" ry="15.6" fill="#0a3f8c" stroke="#020d28" stroke-width="1.6"/><ellipse cx="1144.1" cy="510" rx="14.8" ry="11.2" fill="#0d5cc0" stroke="#000" stroke-width="1.8"/></g>
<circle cx="1181.5" cy="522.9" r="2.8" fill="#0b4aa6" stroke="#000" stroke-width="1"/>
<path d="M1053.9 483.0 C1063.2 485.5 1094.0 492.8 1110.0 498.0 C1126.0 503.2 1140.6 509.1 1150.0 514.0 C1159.4 518.9 1163.8 525.1 1166.5 527.3 L1162 553 L1120.8 575.2 L1084.3 590.4 L1043.8 605.6 L1005.3 621.8 L964.8 638 L937.5 651.1 L900 664.3 L873.4 667 L872 630.5 Z" fill="#0c62c5" stroke="none"/>
<path d="M1053.9 486.6 C1063.2 489.1 1094.0 496.4 1110.0 501.6 C1126.0 506.8 1140.6 512.7 1150.0 517.6 C1159.4 522.5 1163.8 528.7 1166.5 530.9" fill="none" stroke="#1b6fdd" stroke-width="3.6" opacity="0.9"/>
<path d="M1053.9 483.0 C1063.2 485.5 1094.0 492.8 1110.0 498.0 C1126.0 503.2 1140.6 509.1 1150.0 514.0 C1159.4 518.9 1163.8 525.1 1166.5 527.3 L1162 553" fill="none" stroke="#000" stroke-width="1.8" stroke-linejoin="round"/>
<path d="M1111.0 504.2 C1117.7 506.9 1141.6 515.3 1151.0 520.2 C1160.4 525.1 1164.8 531.3 1167.5 533.5" fill="none" stroke="#04225a" stroke-width="1" opacity="0.8"/>
<g transform="rotate(18 1100.5 529)"><ellipse cx="1100.5" cy="529" rx="21.5" ry="16.5" fill="#0c56b6" stroke="#000" stroke-width="2.4"/><ellipse cx="1100.5" cy="529" rx="17.2" ry="12.9" fill="#0a3f8c" stroke="#020d28" stroke-width="1.6"/><ellipse cx="1102.0" cy="530" rx="12.5" ry="9.2" fill="#0d5cc0" stroke="#000" stroke-width="1.8"/></g>
<circle cx="1140" cy="540.2" r="2.8" fill="#0b4aa6" stroke="#000" stroke-width="1"/>
<path d="M1024.6 508.4 C1033.0 510.3 1060.8 516.1 1075.0 520.0 C1089.2 523.9 1102.0 528.4 1110.0 532.0 C1118.0 535.6 1120.7 539.9 1122.8 541.5 L1119.7 573 L1084.3 590.4 L1043.8 605.6 L1005.3 621.8 L964.8 638 L937.5 651.1 L900 664.3 L873.4 667 L872 630.5 Z" fill="#0c62c5" stroke="none"/>
<path d="M1024.6 512.0 C1033.0 513.9 1060.8 519.7 1075.0 523.6 C1089.2 527.5 1102.0 532.0 1110.0 535.6 C1118.0 539.2 1120.7 543.5 1122.8 545.1" fill="none" stroke="#1b6fdd" stroke-width="3.6" opacity="0.9"/>
<path d="M1024.6 508.4 C1033.0 510.3 1060.8 516.1 1075.0 520.0 C1089.2 523.9 1102.0 528.4 1110.0 532.0 C1118.0 535.6 1120.7 539.9 1122.8 541.5 L1119.7 573" fill="none" stroke="#000" stroke-width="1.8" stroke-linejoin="round"/>
<path d="M1076.0 526.2 C1081.8 528.2 1103.0 534.6 1111.0 538.2 C1119.0 541.8 1121.7 546.1 1123.8 547.7" fill="none" stroke="#04225a" stroke-width="1" opacity="0.8"/>
<g transform="rotate(18 1060 547)"><ellipse cx="1060" cy="547" rx="21" ry="16" fill="#0c56b6" stroke="#000" stroke-width="2.4"/><ellipse cx="1060" cy="547" rx="16.8" ry="12.5" fill="#0a3f8c" stroke="#020d28" stroke-width="1.6"/><ellipse cx="1061.5" cy="548" rx="12.2" ry="9.0" fill="#0d5cc0" stroke="#000" stroke-width="1.8"/></g>
<circle cx="1098.5" cy="558.6" r="2.8" fill="#0b4aa6" stroke="#000" stroke-width="1"/>
<path d="M994.2 532.7 C1001.8 534.4 1027.0 539.3 1040.0 543.0 C1053.0 546.7 1064.5 551.5 1072.0 555.0 C1079.5 558.5 1083.1 562.5 1085.3 564.0 L1083.3 588.5 L1043.8 605.6 L1005.3 621.8 L964.8 638 L937.5 651.1 L900 664.3 L873.4 667 L872 630.5 Z" fill="#0c62c5" stroke="none"/>
<path d="M994.2 536.3 C1001.8 538.0 1027.0 542.9 1040.0 546.6 C1053.0 550.3 1064.5 555.1 1072.0 558.6 C1079.5 562.1 1083.1 566.1 1085.3 567.6" fill="none" stroke="#1b6fdd" stroke-width="3.6" opacity="0.9"/>
<path d="M994.2 532.7 C1001.8 534.4 1027.0 539.3 1040.0 543.0 C1053.0 546.7 1064.5 551.5 1072.0 555.0 C1079.5 558.5 1083.1 562.5 1085.3 564.0 L1083.3 588.5" fill="none" stroke="#000" stroke-width="1.8" stroke-linejoin="round"/>
<path d="M1041.0 549.2 C1046.3 551.2 1065.5 557.7 1073.0 561.2 C1080.5 564.7 1084.1 568.7 1086.3 570.2" fill="none" stroke="#04225a" stroke-width="1" opacity="0.8"/>
<g transform="rotate(18 1027 570.5)"><ellipse cx="1027" cy="570.5" rx="19" ry="14.5" fill="#0c56b6" stroke="#000" stroke-width="2.4"/><ellipse cx="1027" cy="570.5" rx="15.2" ry="11.3" fill="#0a3f8c" stroke="#020d28" stroke-width="1.6"/><ellipse cx="1028.5" cy="571.5" rx="11.0" ry="8.1" fill="#0d5cc0" stroke="#000" stroke-width="1.8"/></g>
<circle cx="1065" cy="577.6" r="2.8" fill="#0b4aa6" stroke="#000" stroke-width="1"/>
<path d="M963.8 557.0 C970.7 558.5 993.3 562.8 1005.0 566.0 C1016.7 569.2 1027.2 573.1 1034.0 576.0 C1040.8 578.9 1043.8 582.1 1045.8 583.3 L1043.8 604.5 L1005.3 621.8 L964.8 638 L937.5 651.1 L900 664.3 L873.4 667 L872 630.5 Z" fill="#0c62c5" stroke="none"/>
<path d="M963.8 560.6 C970.7 562.1 993.3 566.4 1005.0 569.6 C1016.7 572.8 1027.2 576.7 1034.0 579.6 C1040.8 582.5 1043.8 585.7 1045.8 586.9" fill="none" stroke="#1b6fdd" stroke-width="3.6" opacity="0.9"/>
<path d="M963.8 557.0 C970.7 558.5 993.3 562.8 1005.0 566.0 C1016.7 569.2 1027.2 573.1 1034.0 576.0 C1040.8 578.9 1043.8 582.1 1045.8 583.3 L1043.8 604.5" fill="none" stroke="#000" stroke-width="1.8" stroke-linejoin="round"/>
<path d="M1006.0 572.2 C1010.8 573.9 1028.2 579.3 1035.0 582.2 C1041.8 585.1 1044.8 588.3 1046.8 589.5" fill="none" stroke="#04225a" stroke-width="1" opacity="0.8"/>
<g transform="rotate(18 992 593)"><ellipse cx="992" cy="593" rx="17" ry="13" fill="#0c56b6" stroke="#000" stroke-width="2.4"/><ellipse cx="992" cy="593" rx="13.6" ry="10.1" fill="#0a3f8c" stroke="#020d28" stroke-width="1.6"/><ellipse cx="993.5" cy="594" rx="9.9" ry="7.3" fill="#0d5cc0" stroke="#000" stroke-width="1.8"/></g>
<circle cx="1023.5" cy="595.8" r="2.8" fill="#0b4aa6" stroke="#000" stroke-width="1"/>
<path d="M934.4 580.3 C940.3 581.6 959.6 585.2 970.0 588.0 C980.4 590.8 990.8 594.4 997.0 597.0 C1003.2 599.6 1005.6 602.4 1007.3 603.5 L1005.3 620.5 L964.8 638 L937.5 651.1 L900 664.3 L873.4 667 L872 630.5 Z" fill="#0c62c5" stroke="none"/>
<path d="M934.4 583.9 C940.3 585.2 959.6 588.8 970.0 591.6 C980.4 594.4 990.8 598.0 997.0 600.6 C1003.2 603.2 1005.6 606.0 1007.3 607.1" fill="none" stroke="#1b6fdd" stroke-width="3.6" opacity="0.9"/>
<path d="M934.4 580.3 C940.3 581.6 959.6 585.2 970.0 588.0 C980.4 590.8 990.8 594.4 997.0 597.0 C1003.2 599.6 1005.6 602.4 1007.3 603.5 L1005.3 620.5" fill="none" stroke="#000" stroke-width="1.8" stroke-linejoin="round"/>
<path d="M971.0 594.2 C975.5 595.7 991.8 600.6 998.0 603.2 C1004.2 605.8 1006.6 608.6 1008.3 609.7" fill="none" stroke="#04225a" stroke-width="1" opacity="0.8"/>
<g transform="rotate(18 956.7 613)"><ellipse cx="956.7" cy="613" rx="15" ry="11.5" fill="#0c56b6" stroke="#000" stroke-width="2.4"/><ellipse cx="956.7" cy="613" rx="12.0" ry="9.0" fill="#0a3f8c" stroke="#020d28" stroke-width="1.6"/><ellipse cx="958.2" cy="614" rx="8.7" ry="6.4" fill="#0d5cc0" stroke="#000" stroke-width="1.8"/></g>
<circle cx="988.5" cy="614" r="2.8" fill="#0b4aa6" stroke="#000" stroke-width="1"/>
<path d="M904.0 601.5 C909.2 602.6 926.3 605.6 935.0 608.0 C943.7 610.4 951.0 613.7 956.0 616.0 C961.0 618.3 963.3 620.8 964.8 621.8 L963.8 637.5 L937.5 651.1 L900 664.3 L873.4 667 L872 630.5 Z" fill="#0c62c5" stroke="none"/>
<path d="M904.0 605.1 C909.2 606.2 926.3 609.2 935.0 611.6 C943.7 614.0 951.0 617.3 956.0 619.6 C961.0 621.9 963.3 624.4 964.8 625.4" fill="none" stroke="#1b6fdd" stroke-width="3.6" opacity="0.9"/>
<path d="M904.0 601.5 C909.2 602.6 926.3 605.6 935.0 608.0 C943.7 610.4 951.0 613.7 956.0 616.0 C961.0 618.3 963.3 620.8 964.8 621.8 L963.8 637.5" fill="none" stroke="#000" stroke-width="1.8" stroke-linejoin="round"/>
<path d="M936.0 614.2 C939.5 615.5 952.0 619.9 957.0 622.2 C962.0 624.5 964.3 627.0 965.8 628.0" fill="none" stroke="#04225a" stroke-width="1" opacity="0.8"/>
<circle cx="944.6" cy="632.9" r="2.8" fill="#0b4aa6" stroke="#000" stroke-width="1"/>
<path d="M876.0 621.0 C880.8 621.8 896.3 624.3 905.0 626.0 C913.7 627.7 922.6 629.3 928.0 631.0 C933.4 632.7 935.9 635.2 937.5 636.0 L937.5 650.5 L900 664.3 L873.4 667 L872 630.5 Z" fill="#0c62c5" stroke="none"/>
<path d="M876.0 624.6 C880.8 625.4 896.3 627.9 905.0 629.6 C913.7 631.3 922.6 632.9 928.0 634.6 C933.4 636.3 935.9 638.8 937.5 639.6" fill="none" stroke="#1b6fdd" stroke-width="3.6" opacity="0.9"/>
<path d="M876.0 621.0 C880.8 621.8 896.3 624.3 905.0 626.0 C913.7 627.7 922.6 629.3 928.0 631.0 C933.4 632.7 935.9 635.2 937.5 636.0 L937.5 650.5" fill="none" stroke="#000" stroke-width="1.8" stroke-linejoin="round"/>
<path d="M906.0 632.2 C909.8 633.0 923.6 635.5 929.0 637.2 C934.4 638.9 936.9 641.4 938.5 642.2" fill="none" stroke="#04225a" stroke-width="1" opacity="0.8"/>
<circle cx="916.2" cy="644" r="2.8" fill="#0b4aa6" stroke="#000" stroke-width="1"/>
<path d="M1066.0 431.0 L1120.0 449.0 L1160.0 465.5 L1178.0 481.0" fill="none" stroke="#000" stroke-width="1.2" />
<path d="M1031.6 612 L1036 622 A14 14 0 0 0 1062 622 L1072.2 600 Z" fill="#4a4a4a" stroke="#000" stroke-width="1"/><circle cx="1048.5" cy="614.5" r="4.6" fill="#3e6680" stroke="#000" stroke-width="1"/>
<path d="M1202.8 536.5 L1163.3 555.0 L1120.8 575.2 L1084.3 590.4 L1043.8 605.6 L1005.3 621.8 L964.8 638.0 L937.5 651.1 L900.0 664.3 L873.4 667.0" fill="none" stroke="#000" stroke-width="1.6" />
<path d="M610.0 306.5 L661.0 316.5 L721.5 330.6 L782.0 349.0 L843.0 365.0 L900.0 381.3 L960.0 398.0 L1017.5 414.7 L1066.0 429.0 L1064.0 432.0 L1019.5 425.5 L960.0 406.0 L900.0 389.0 L843.0 372.0 L782.0 356.0 L721.5 337.5 L661.0 322.0 L614.0 310.5 Z" fill="#4b4b4b" stroke="#000" stroke-width="1.2" stroke-linejoin="round" />
<path d="M662.0 323.0 L700.0 333.0" fill="none" stroke="#e06a6a" stroke-width="2.4" />
<path d="M720.0 339.0 L760.0 350.0" fill="none" stroke="#e06a6a" stroke-width="2.4" />
<path d="M778.0 357.0 L810.0 365.0" fill="none" stroke="#e06a6a" stroke-width="2.4" />
<path d="M893.0 389.0 L925.0 397.0" fill="none" stroke="#e06a6a" stroke-width="2.4" />
<path d="M948.0 405.0 L975.0 412.0" fill="none" stroke="#e06a6a" stroke-width="2.4" />
<path d="M618.0 316.5 L711.4 405.6 L741.8 480.0 L796.5 587.3 L812.7 587.3 L766.0 480.0 L728.0 404.0 L632.0 316.0 Z" fill="#5a8a3c" stroke="#000" stroke-width="1.2" stroke-linejoin="round" />
<path d="M625.0 317.0 L719.5 405.0 L753.5 480.0 L804.0 586.0" fill="none" stroke="#ff6f6f" stroke-width="11.5" stroke-dasharray="1.5 0.9" opacity="0.95"/>
<path d="M632.0 316.0 L728.0 404.0 L766.0 480.0 L812.7 587.3" fill="none" stroke="#000" stroke-width="2.2" />
<path d="M832.9 377.2 L846.0 380.0 L884.0 409.0 L925.0 490.0 L905.0 492.0 L868.0 418.0 Z" fill="#5a8a3c" stroke="#000" stroke-width="1.2" stroke-linejoin="round" />
<path d="M839.0 379.0 L876.0 412.0 L914.0 490.0" fill="none" stroke="#ff6f6f" stroke-width="11.5" stroke-dasharray="1.5 0.9" opacity="0.95"/>
<path d="M846.0 380.0 L884.0 409.0 L925.0 490.0" fill="none" stroke="#000" stroke-width="2" />
<rect x="638.5" y="323.5" width="10" height="9" rx="2.5" fill="#c9a76a" stroke="#000" stroke-width="0.8"/>
<rect x="652" y="336" width="11" height="9" rx="2.5" fill="#c9a76a" stroke="#000" stroke-width="0.8"/>
<rect x="681" y="363" width="10" height="8" rx="2.5" fill="#c9a76a" stroke="#000" stroke-width="0.8"/>
<rect x="695" y="377" width="10" height="8" rx="2.5" fill="#c9a76a" stroke="#000" stroke-width="0.8"/>
<rect x="729.6" y="411.6" width="16" height="10" rx="2.5" fill="#c9a76a" stroke="#000" stroke-width="0.8"/>
<rect x="739.7" y="427.8" width="12.5" height="14" rx="2.5" fill="#b9b9e2" stroke="#000" stroke-width="0.8"/>
<rect x="741" y="446" width="20" height="6" rx="2.5" fill="#b9b9e2" stroke="#000" stroke-width="0.8"/>
<rect x="754" y="462" width="14" height="12.5" rx="2.5" fill="#c9a76a" stroke="#000" stroke-width="0.8"/>
<rect x="887.6" y="418.7" width="12" height="11.5" rx="2.5" fill="#c9a76a" stroke="#000" stroke-width="0.8"/>
<rect x="896" y="436" width="14" height="5" rx="2.5" fill="#b9b9e2" stroke="#000" stroke-width="0.8"/>
<rect x="901.8" y="446" width="12.5" height="14" rx="2.5" fill="#b9b9e2" stroke="#000" stroke-width="0.8"/>
<path d="M620 395 Q640 440 661 480 T700 540 T750 608 T805 667" fill="none" stroke="#ff6f6f" stroke-width="9" stroke-dasharray="1 1.6"/>
<path d="M620 395 Q640 440 661 480 T700 540 T750 608 T805 667" fill="none" stroke="#ff6f6f" stroke-width="1"/>
<path d="M833 506 Q860 545 885 585 T922 640" fill="none" stroke="#ff6f6f" stroke-width="9" stroke-dasharray="1 1.6"/>
<path d="M833 506 Q860 545 885 585 T922 640" fill="none" stroke="#ff6f6f" stroke-width="1"/>
<path d="M440 452 L524 407.5 L540 412 L560 447 L470 492 L440 490 A21.5 21.5 0 0 1 440 452 Z" fill="#464646" stroke="#000" stroke-width="1.2"/>
<path d="M452.0 455.0 L528.0 415.0" fill="none" stroke="#222" stroke-width="1.5" />
<path d="M468.0 463.0 L470.0 480.0 L485.0 472.0 L540.0 430.0" fill="none" stroke="#2b2b2b" stroke-width="2" />
<circle cx="448.7" cy="471.3" r="9" fill="#2a2a33" stroke="#000"/><circle cx="448.7" cy="471.3" r="6.6" fill="none" stroke="#b5764f" stroke-width="1"/><circle cx="448.7" cy="471.3" r="4.4" fill="#3f78c8" stroke="#111" stroke-width="0.8"/>
<path d="M449 475 L537.7 424 L560 447 L558 516 L545 522 L500.6 536.5 L456 514 A23 23 0 0 1 449 475 Z" fill="#3f7b40" stroke="#000" stroke-width="1.2"/>
<path d="M466.0 470.0 L532.0 431.0" fill="none" stroke="#1d4a20" stroke-width="1.6" />
<path d="M467.0 512.0 L500.0 530.0 L520.0 525.0" fill="none" stroke="#1d4a20" stroke-width="1.6" />
<path d="M487 466 Q482 482 492 485 L513 487 Q520 483 527 487 L545 485 Q556 480 556 462 L552 452 Z" fill="none" stroke="#234f25" stroke-width="2.2"/>
<path d="M486 500 Q482 512 490 518 L505 532 L548 518 Q556 512 552 500 L545 497 Q525 505 516 500 L495 498 Z" fill="none" stroke="#234f25" stroke-width="2.2"/>
<circle cx="519.5" cy="495" r="3.3" fill="#3a4a3a" stroke="#111" stroke-width="0.8"/>
<rect x="504" y="473" width="3" height="3" fill="#bdbdbd"/>
<circle cx="463.2" cy="493" r="9.6" fill="#2a2a33" stroke="#000"/><circle cx="463.2" cy="493" r="7" fill="none" stroke="#b5764f" stroke-width="1"/><circle cx="463.2" cy="493" r="4.4" fill="#5a5a66" stroke="#111" stroke-width="0.8"/>
<path d="M345.5 309.2 L363 306 L427.3 298 L450 322.5 L447 363 L426 362 L363.5 345.2 L354 346.6 A19.2 19.2 0 0 1 345.5 309.2 Z" fill="#464646" stroke="#000" stroke-width="1.2"/>
<path d="M364.5 309.0 L425.0 301.0" fill="none" stroke="#222" stroke-width="1.5" />
<path d="M364.5 343.0 L424.0 358.5" fill="none" stroke="#222" stroke-width="1.5" />
<path d="M372 311 L420 304.5 L440 318 Q445 322 440 324 L414 324 Q407 319 400 324 L376 324 Q367 318 372 311 Z" fill="none" stroke="#262626" stroke-width="2.2"/>
<path d="M374 333 Q366 339 373 343 L421 356 L440 358 Q445 354 443 336 L438 331 L414 331.5 Q407 336 400 332 Z" fill="none" stroke="#262626" stroke-width="2.2"/>
<circle cx="407.5" cy="328.8" r="3.3" fill="#2a78e0" stroke="#111" stroke-width="0.8"/>
<circle cx="351.4" cy="327.6" r="8.2" fill="#14213f" stroke="#000" stroke-width="0.8"/><circle cx="351.4" cy="327.6" r="6.3999999999999995" fill="none" stroke="#1d3f8a" stroke-width="1.6"/><circle cx="351.4" cy="327.6" r="4.2" fill="#2a78e0" stroke="#0a1020" stroke-width="0.8"/>
<path d="M396.5 390 L415 383.5 L478 361.5 L497 371 L500 421 L452 449 L403 426.3 A19.2 19.2 0 0 1 396.5 390 Z" fill="#464646" stroke="#000" stroke-width="1.2"/>
<path d="M416.0 386.5 L478.0 365.0" fill="none" stroke="#222" stroke-width="1.5" />
<path d="M414.0 428.0 L452.0 445.0" fill="none" stroke="#222" stroke-width="1.5" />
<path d="M425 384 L478 367 L492 375 L494 398 Q491 403 484 403 L466 401.5 Q460 396 453 401 L430 400 Q420 395 425 384 Z" fill="none" stroke="#262626" stroke-width="2.2"/>
<path d="M425 415 Q418 425 426 431 L452 443 L494 421 L494 414 Q490 409 484 410 L466 414 Q460 420 453 415 Z" fill="none" stroke="#262626" stroke-width="2.2"/>
<circle cx="461" cy="408.6" r="3.2" fill="#2a3a9a" stroke="#111" stroke-width="0.8"/><circle cx="461.6" cy="407.6" r="1.4" fill="#ddd"/>
<circle cx="405.1" cy="407.2" r="8.2" fill="#14213f" stroke="#000" stroke-width="0.8"/><circle cx="405.1" cy="407.2" r="6.3999999999999995" fill="none" stroke="#1d3f8a" stroke-width="1.6"/><circle cx="405.1" cy="407.2" r="4.2" fill="#2a78e0" stroke="#0a1020" stroke-width="0.8"/>
<path d="M450.0 323.0 L498.0 372.0 L497.0 371.0 L478.0 361.5 L452.0 353.0 Z" fill="#0c62c5" stroke="#000" stroke-width="1" stroke-linejoin="round" />
<path d="M500.0 376.0 L535.0 409.0 L523.0 408.0 L502.0 419.0 Z" fill="#0c62c5" stroke="#000" stroke-width="1" stroke-linejoin="round" />
<path d="M533.0 590.0 L570.0 606.0 L567.0 622.0 L548.0 619.0 Z" fill="#464646" stroke="#000" stroke-width="1.1" stroke-linejoin="round" />
<circle cx="556" cy="604" r="3.4" fill="#4e86c4" stroke="#111" stroke-width="0.8"/>
<path d="M496.5 542.2 L582.6 511 L601 519 L606 546 L606.5 606.4 L597 606.4 L506 576.8 A19 19 0 0 1 496.5 542.2 Z" fill="#464646" stroke="#000" stroke-width="1.2"/>
<path d="M517.0 538.0 L582.0 515.0" fill="none" stroke="#222" stroke-width="1.5" />
<path d="M516.0 578.5 L596.0 604.0" fill="none" stroke="#222" stroke-width="1.5" />
<path d="M527 537.5 L583 517.5 L598 526 L600 549 Q597 553 590 553 L572 552 Q565 547 558 552 L534 552 Q523 546 527 537.5 Z" fill="none" stroke="#262626" stroke-width="2.2"/>
<path d="M529 568 Q522 577 531 582 L594 602 L600 598 L600 574 Q597 568 590 568 L572 569 Q565 574 558 569 Z" fill="none" stroke="#262626" stroke-width="2.2"/>
<circle cx="563.7" cy="560.2" r="3.2" fill="#cfcfcf" stroke="#111" stroke-width="0.8"/>
<circle cx="507.8" cy="558.2" r="8.2" fill="#14213f" stroke="#000" stroke-width="0.8"/><circle cx="507.8" cy="558.2" r="6.3999999999999995" fill="none" stroke="#1d3f8a" stroke-width="1.6"/><circle cx="507.8" cy="558.2" r="4.2" fill="#2a78e0" stroke="#0a1020" stroke-width="0.8"/>
<path d="M561 619.6 A18.6 18.6 0 1 0 566 657.5 L580 660 L585 652 L572 612 Z" fill="#464646" stroke="#000" stroke-width="1.2"/>
<circle cx="560.9" cy="638.2" r="8.2" fill="#14213f" stroke="#000" stroke-width="0.8"/><circle cx="560.9" cy="638.2" r="6.3999999999999995" fill="none" stroke="#1d3f8a" stroke-width="1.6"/><circle cx="560.9" cy="638.2" r="4.2" fill="#2a78e0" stroke="#0a1020" stroke-width="0.8"/>
<path d="M565.7 608.8 L586.0 612.0 L597.0 652.0 L592.0 668.0 L575.0 670.5 L563.0 667.5 L566.0 660.0 L579.0 654.0 Z" fill="#0c62c5" stroke="#000" stroke-width="1.2" stroke-linejoin="round" />
<path d="M586.2 612.4 L600.6 617.2 L598.6 664.0 L593.0 668.0 L594.0 640.0 L590.0 624.0 Z" fill="#d9d9d9" stroke="#000" stroke-width="0.9" stroke-linejoin="round" />
<path d="M601.0 617.0 L598.5 667.0" fill="none" stroke="#000" stroke-width="1.2" />
<path d="M566.0 609.0 L640.0 611.5" fill="none" stroke="#000" stroke-width="1.3" />
<path d="M638.0 611.5 L662.0 612.0 L663.0 620.0 L641.0 619.0 Z" fill="#555" stroke="#000" stroke-width="1" stroke-linejoin="round" />
<path d="M636.0 668.5 L668.0 669.5 L668.0 675.5 L637.0 674.5 Z" fill="#555" stroke="#000" stroke-width="1" stroke-linejoin="round" />
<path d="M668.0 664.0 L682.0 665.0 L682.0 671.0 L668.0 670.0 Z" fill="#4f8f3a" stroke="#000" stroke-width="0.8" stroke-linejoin="round" />
<path d="M660.0 620.0 L664.0 668.0" fill="none" stroke="#000" stroke-width="1.2" />
<path d="M654.0 620.0 L657.0 668.0" fill="none" stroke="#000" stroke-width="1" />
<path d="M820.0 669.0 L872.0 665.0 L873.0 668.5 L821.0 673.5 Z" fill="#555" stroke="#000" stroke-width="1" stroke-linejoin="round" />
<path d="M828.0 671.0 L860.0 668.0" fill="none" stroke="#e06a6a" stroke-width="1.8" />
<path d="M427.3 297.2 L468.9 296.2 L578.2 406.6 L692.3 637.7 L688.7 642.6 L674.2 638.9 L636.8 612.4 L535.7 408.6 Z" fill="#4b4b4b" stroke="#000" stroke-width="1.3" stroke-linejoin="round" />
<path d="M535.7 408.6 L578.2 406.6" fill="none" stroke="#222" stroke-width="1" />
<path d="M431.0 299.5 L537.0 410.0 L638.0 613.0" fill="none" stroke="#1f1f1f" stroke-width="1.2" opacity="0.7"/>
<path d="M1018.2 424.3 L1069.0 431.0 L1079.5 458.0 L872.0 630.5 L821.2 621.0 L1028.0 448.0 Z" fill="#4b4b4b" stroke="#000" stroke-width="1.3" stroke-linejoin="round" />
<path d="M1078.0 461.0 L871.0 632.5" fill="none" stroke="#1f1f1f" stroke-width="2.2" opacity="0.85"/>
<path d="M980.0 540.0 L900.0 604.0" fill="none" stroke="#d9776a" stroke-width="1.6" opacity="0.0"/>
<path d="M866 556 Q885 585 903 612" fill="none" stroke="#ff6f6f" stroke-width="9" stroke-dasharray="1 1.6"/>
<path d="M531.9 347.9 L539.1 355.1 M539.1 347.9 L531.9 355.1" stroke="#ff6f6f" stroke-width="0.9"/><path d="M536.9 352.9 L544.1 360.1 M544.1 352.9 L536.9 360.1" stroke="#ff6f6f" stroke-width="0.9"/>
<path d="M557.9 348.2 L565.1 355.4 M565.1 348.2 L557.9 355.4" stroke="#ff6f6f" stroke-width="0.9"/><path d="M562.9 353.2 L570.1 360.4 M570.1 353.2 L562.9 360.4" stroke="#ff6f6f" stroke-width="0.9"/>
<path d="M585.3 348.9 L592.5 356.1 M592.5 348.9 L585.3 356.1" stroke="#ff6f6f" stroke-width="0.9"/><path d="M590.3 353.9 L597.5 361.1 M597.5 353.9 L590.3 361.1" stroke="#ff6f6f" stroke-width="0.9"/>
<path d="M611.9 349.9 L619.1 357.1 M619.1 349.9 L611.9 357.1" stroke="#ff6f6f" stroke-width="0.9"/><path d="M616.9 354.9 L624.1 362.1 M624.1 354.9 L616.9 362.1" stroke="#ff6f6f" stroke-width="0.9"/>
<path d="M639.5 349.9 L646.7 357.1 M646.7 349.9 L639.5 357.1" stroke="#ff6f6f" stroke-width="0.9"/><path d="M644.5 354.9 L651.7 362.1 M651.7 354.9 L644.5 362.1" stroke="#ff6f6f" stroke-width="0.9"/>
<path d="M676.9 350.9 L684.1 358.1 M684.1 350.9 L676.9 358.1" stroke="#ff6f6f" stroke-width="0.9"/><path d="M681.9 355.9 L689.1 363.1 M689.1 355.9 L681.9 363.1" stroke="#ff6f6f" stroke-width="0.9"/>
<path d="M705.3 352.9 L712.5 360.1 M712.5 352.9 L705.3 360.1" stroke="#ff6f6f" stroke-width="0.9"/><path d="M710.3 357.9 L717.5 365.1 M717.5 357.9 L710.3 365.1" stroke="#ff6f6f" stroke-width="0.9"/>
<path d="M733.6 353.9 L740.8 361.1 M740.8 353.9 L733.6 361.1" stroke="#ff6f6f" stroke-width="0.9"/><path d="M738.6 358.9 L745.8 366.1 M745.8 358.9 L738.6 366.1" stroke="#ff6f6f" stroke-width="0.9"/>
<path d="M762.9 355.9 L770.1 363.1 M770.1 355.9 L762.9 363.1" stroke="#ff6f6f" stroke-width="0.9"/><path d="M767.9 360.9 L775.1 368.1 M775.1 360.9 L767.9 368.1" stroke="#ff6f6f" stroke-width="0.9"/>
<path d="M786.3 357.9 L793.5 365.1 M793.5 357.9 L786.3 365.1" stroke="#ff6f6f" stroke-width="0.9"/><path d="M791.3 362.9 L798.5 370.1 M798.5 362.9 L791.3 370.1" stroke="#ff6f6f" stroke-width="0.9"/>
<path d="M799.9 361.4 L807.1 368.6 M807.1 361.4 L799.9 368.6" stroke="#ff6f6f" stroke-width="0.9"/><path d="M804.9 366.4 L812.1 373.6 M812.1 366.4 L804.9 373.6" stroke="#ff6f6f" stroke-width="0.9"/>
<path d="M813.6 361.4 L820.8 368.6 M820.8 361.4 L813.6 368.6" stroke="#ff6f6f" stroke-width="0.9"/><path d="M818.6 366.4 L825.8 373.6 M825.8 366.4 L818.6 373.6" stroke="#ff6f6f" stroke-width="0.9"/>
<path d="M828.9 364.9 L836.1 372.1 M836.1 364.9 L828.9 372.1" stroke="#ff6f6f" stroke-width="0.9"/><path d="M833.9 369.9 L841.1 377.1 M841.1 369.9 L833.9 377.1" stroke="#ff6f6f" stroke-width="0.9"/>
<path d="M525.5 461.4 L532.7 468.6 M532.7 461.4 L525.5 468.6" stroke="#ff6f6f" stroke-width="0.9"/><path d="M530.5 466.4 L537.7 473.6 M537.7 466.4 L530.5 473.6" stroke="#ff6f6f" stroke-width="0.9"/>
<path d="M553.9 461.9 L561.1 469.1 M561.1 461.9 L553.9 469.1" stroke="#ff6f6f" stroke-width="0.9"/><path d="M558.9 466.9 L566.1 474.1 M566.1 466.9 L558.9 474.1" stroke="#ff6f6f" stroke-width="0.9"/>
<path d="M581.2 464.3 L588.4 471.5 M588.4 464.3 L581.2 471.5" stroke="#ff6f6f" stroke-width="0.9"/><path d="M586.2 469.3 L593.4 476.5 M593.4 469.3 L586.2 476.5" stroke="#ff6f6f" stroke-width="0.9"/>
<path d="M607.6 466.3 L614.8 473.5 M614.8 466.3 L607.6 473.5" stroke="#ff6f6f" stroke-width="0.9"/><path d="M612.6 471.3 L619.8 478.5 M619.8 471.3 L612.6 478.5" stroke="#ff6f6f" stroke-width="0.9"/>
<path d="M633.4 467.3 L640.6 474.5 M640.6 467.3 L633.4 474.5" stroke="#ff6f6f" stroke-width="0.9"/><path d="M638.4 472.3 L645.6 479.5 M645.6 472.3 L638.4 479.5" stroke="#ff6f6f" stroke-width="0.9"/>
<path d="M671.9 468.3 L679.1 475.5 M679.1 468.3 L671.9 475.5" stroke="#ff6f6f" stroke-width="0.9"/><path d="M676.9 473.3 L684.1 480.5 M684.1 473.3 L676.9 480.5" stroke="#ff6f6f" stroke-width="0.9"/>
<path d="M700.2 469.3 L707.4 476.5 M707.4 469.3 L700.2 476.5" stroke="#ff6f6f" stroke-width="0.9"/><path d="M705.2 474.3 L712.4 481.5 M712.4 474.3 L705.2 481.5" stroke="#ff6f6f" stroke-width="0.9"/>
<path d="M727.6 468.3 L734.8 475.5 M734.8 468.3 L727.6 475.5" stroke="#ff6f6f" stroke-width="0.9"/><path d="M732.6 473.3 L739.8 480.5 M739.8 473.3 L732.6 480.5" stroke="#ff6f6f" stroke-width="0.9"/>
<path d="M763.9 471.4 L771.1 478.6 M771.1 471.4 L763.9 478.6" stroke="#ff6f6f" stroke-width="0.9"/><path d="M768.9 476.4 L776.1 483.6 M776.1 476.4 L768.9 483.6" stroke="#ff6f6f" stroke-width="0.9"/>
<path d="M784.9 465.4 L792.1 472.6 M792.1 465.4 L784.9 472.6" stroke="#ff6f6f" stroke-width="0.9"/><path d="M789.9 470.4 L797.1 477.6 M797.1 470.4 L789.9 477.6" stroke="#ff6f6f" stroke-width="0.9"/>
<path d="M811.9 463.9 L819.1 471.1 M819.1 463.9 L811.9 471.1" stroke="#ff6f6f" stroke-width="0.9"/><path d="M816.9 468.9 L824.1 476.1 M824.1 468.9 L816.9 476.1" stroke="#ff6f6f" stroke-width="0.9"/>
<path d="M824.9 470.4 L832.1 477.6 M832.1 470.4 L824.9 477.6" stroke="#ff6f6f" stroke-width="0.9"/><path d="M829.9 475.4 L837.1 482.6 M837.1 475.4 L829.9 482.6" stroke="#ff6f6f" stroke-width="0.9"/>
<path d="M632.4 500.2 L639.6 507.4 M639.6 500.2 L632.4 507.4" stroke="#ff6f6f" stroke-width="0.9"/><path d="M637.4 505.2 L644.6 512.4 M644.6 505.2 L637.4 512.4" stroke="#ff6f6f" stroke-width="0.9"/>
<path d="M660.7 500.4 L667.9 507.6 M667.9 500.4 L660.7 507.6" stroke="#ff6f6f" stroke-width="0.9"/><path d="M665.7 505.4 L672.9 512.6 M672.9 505.4 L665.7 512.6" stroke="#ff6f6f" stroke-width="0.9"/>
<path d="M687.1 500.9 L694.3 508.1 M694.3 500.9 L687.1 508.1" stroke="#ff6f6f" stroke-width="0.9"/><path d="M692.1 505.9 L699.3 513.1 M699.3 505.9 L692.1 513.1" stroke="#ff6f6f" stroke-width="0.9"/>
<path d="M714.4 501.4 L721.6 508.6 M721.6 501.4 L714.4 508.6" stroke="#ff6f6f" stroke-width="0.9"/><path d="M719.4 506.4 L726.6 513.6 M726.6 506.4 L719.4 513.6" stroke="#ff6f6f" stroke-width="0.9"/>
<path d="M740.7 502.4 L747.9 509.6 M747.9 502.4 L740.7 509.6" stroke="#ff6f6f" stroke-width="0.9"/><path d="M745.7 507.4 L752.9 514.6 M752.9 507.4 L745.7 514.6" stroke="#ff6f6f" stroke-width="0.9"/>
<path d="M779.2 502.9 L786.4 510.1 M786.4 502.9 L779.2 510.1" stroke="#ff6f6f" stroke-width="0.9"/><path d="M784.2 507.9 L791.4 515.1 M791.4 507.9 L784.2 515.1" stroke="#ff6f6f" stroke-width="0.9"/>
<path d="M807.6 504.4 L814.8 511.6 M814.8 504.4 L807.6 511.6" stroke="#ff6f6f" stroke-width="0.9"/><path d="M812.6 509.4 L819.8 516.6 M819.8 509.4 L812.6 516.6" stroke="#ff6f6f" stroke-width="0.9"/>
<path d="M832.9 505.9 L840.1 513.1 M840.1 505.9 L832.9 513.1" stroke="#ff6f6f" stroke-width="0.9"/><path d="M837.9 510.9 L845.1 518.1 M845.1 510.9 L837.9 518.1" stroke="#ff6f6f" stroke-width="0.9"/>
<path d="M866.3 507.9 L873.5 515.1 M873.5 507.9 L866.3 515.1" stroke="#ff6f6f" stroke-width="0.9"/><path d="M871.3 512.9 L878.5 520.1 M878.5 512.9 L871.3 520.1" stroke="#ff6f6f" stroke-width="0.9"/>
<path d="M895.7 508.9 L902.9 516.1 M902.9 508.9 L895.7 516.1" stroke="#ff6f6f" stroke-width="0.9"/><path d="M900.7 513.9 L907.9 521.1 M907.9 513.9 L900.7 521.1" stroke="#ff6f6f" stroke-width="0.9"/>
<path d="M923.9 512.9 L931.1 520.1 M931.1 512.9 L923.9 520.1" stroke="#ff6f6f" stroke-width="0.9"/><path d="M928.9 517.9 L936.1 525.1 M936.1 517.9 L928.9 525.1" stroke="#ff6f6f" stroke-width="0.9"/>
<path d="M629.3 615.7 L636.5 622.9 M636.5 615.7 L629.3 622.9" stroke="#ff6f6f" stroke-width="0.9"/><path d="M634.3 620.7 L641.5 627.9 M641.5 620.7 L634.3 627.9" stroke="#ff6f6f" stroke-width="0.9"/>
<path d="M656.7 615.9 L663.9 623.1 M663.9 615.9 L656.7 623.1" stroke="#ff6f6f" stroke-width="0.9"/><path d="M661.7 620.9 L668.9 628.1 M668.9 620.9 L661.7 628.1" stroke="#ff6f6f" stroke-width="0.9"/>
<path d="M682.9 616.9 L690.1 624.1 M690.1 616.9 L682.9 624.1" stroke="#ff6f6f" stroke-width="0.9"/><path d="M687.9 621.9 L695.1 629.1 M695.1 621.9 L687.9 629.1" stroke="#ff6f6f" stroke-width="0.9"/>
<path d="M710.4 617.9 L717.6 625.1 M717.6 617.9 L710.4 625.1" stroke="#ff6f6f" stroke-width="0.9"/><path d="M715.4 622.9 L722.6 630.1 M722.6 622.9 L715.4 630.1" stroke="#ff6f6f" stroke-width="0.9"/>
<path d="M737.7 618.9 L744.9 626.1 M744.9 618.9 L737.7 626.1" stroke="#ff6f6f" stroke-width="0.9"/><path d="M742.7 623.9 L749.9 631.1 M749.9 623.9 L742.7 631.1" stroke="#ff6f6f" stroke-width="0.9"/>
<path d="M775.2 618.9 L782.4 626.1 M782.4 618.9 L775.2 626.1" stroke="#ff6f6f" stroke-width="0.9"/><path d="M780.2 623.9 L787.4 631.1 M787.4 623.9 L780.2 631.1" stroke="#ff6f6f" stroke-width="0.9"/>
<path d="M803.5 620.4 L810.7 627.6 M810.7 620.4 L803.5 627.6" stroke="#ff6f6f" stroke-width="0.9"/><path d="M808.5 625.4 L815.7 632.6 M815.7 625.4 L808.5 632.6" stroke="#ff6f6f" stroke-width="0.9"/>
<path d="M832.9 620.4 L840.1 627.6 M840.1 620.4 L832.9 627.6" stroke="#ff6f6f" stroke-width="0.9"/><path d="M837.9 625.4 L845.1 632.6 M845.1 625.4 L837.9 632.6" stroke="#ff6f6f" stroke-width="0.9"/>
<path d="M861.2 620.4 L868.4 627.6 M868.4 620.4 L861.2 627.6" stroke="#ff6f6f" stroke-width="0.9"/><path d="M866.2 625.4 L873.4 632.6 M873.4 625.4 L866.2 632.6" stroke="#ff6f6f" stroke-width="0.9"/>
<path d="M889.6 619.9 L896.8 627.1 M896.8 619.9 L889.6 627.1" stroke="#ff6f6f" stroke-width="0.9"/><path d="M894.6 624.9 L901.8 632.1 M901.8 624.9 L894.6 632.1" stroke="#ff6f6f" stroke-width="0.9"/>
<path d="M908.9 610.9 L916.1 618.1 M916.1 610.9 L908.9 618.1" stroke="#ff6f6f" stroke-width="0.9"/><path d="M913.9 615.9 L921.1 623.1 M921.1 615.9 L913.9 623.1" stroke="#ff6f6f" stroke-width="0.9"/>
<path d="M919.9 617.7 L927.1 624.9 M927.1 617.7 L919.9 624.9" stroke="#ff6f6f" stroke-width="0.9"/><path d="M924.9 622.7 L932.1 629.9 M932.1 622.7 L924.9 629.9" stroke="#ff6f6f" stroke-width="0.9"/>
<path d="M541.4 483.4 L548.6 490.6 M548.6 483.4 L541.4 490.6" stroke="#ff8a5a" stroke-width="0.9"/>
<path d="M547.4 491.4 L554.6 498.6 M554.6 491.4 L547.4 498.6" stroke="#ff8a5a" stroke-width="0.9"/>
<rect x="1026.1" y="457.3" width="2" height="2" fill="#000"/>
<rect x="1029.7" y="459.0" width="2" height="2" fill="#000"/>
<rect x="1022.3" y="466.9" width="2" height="2" fill="#000"/>
<rect x="1041.4" y="479.6" width="2" height="2" fill="#000"/>
<rect x="1037.9" y="461.1" width="2" height="2" fill="#000"/>
<rect x="1032.8" y="462.9" width="2" height="2" fill="#000"/>
<rect x="1024.7" y="457.4" width="2" height="2" fill="#000"/>
<rect x="1025.6" y="483.7" width="2" height="2" fill="#000"/>
<rect x="1039.4" y="479.8" width="2" height="2" fill="#000"/>
<rect x="1038.7" y="460.2" width="2" height="2" fill="#000"/>
<rect x="1027.7" y="474.1" width="2" height="2" fill="#000"/>
<rect x="1037.2" y="481.3" width="2" height="2" fill="#000"/>
<rect x="1040.5" y="456.8" width="2" height="2" fill="#000"/>
<rect x="1034.4" y="475.5" width="2" height="2" fill="#000"/>
<rect x="1032.1" y="459.7" width="2" height="2" fill="#000"/>
<rect x="1031.4" y="456.9" width="2" height="2" fill="#000"/>
<rect x="1041.7" y="481.7" width="2" height="2" fill="#000"/>
<rect x="1033.1" y="463.6" width="2" height="2" fill="#000"/>
<rect x="1036.9" y="506.7" width="2" height="2" fill="#000"/>
<rect x="1036.4" y="513.4" width="2" height="2" fill="#000"/>
<rect x="1030.1" y="502.9" width="2" height="2" fill="#000"/>
<rect x="1031.7" y="503.3" width="2" height="2" fill="#000"/>
<rect x="1024.3" y="500.3" width="2" height="2" fill="#000"/>
<rect x="1035.3" y="494.0" width="2" height="2" fill="#000"/>
<rect x="1022.4" y="508.0" width="2" height="2" fill="#000"/>
<rect x="1026.3" y="505.8" width="2" height="2" fill="#000"/>
<rect x="1029.5" y="501.2" width="2" height="2" fill="#000"/>
<rect x="1038.4" y="497.7" width="2" height="2" fill="#000"/>
<rect x="1028.5" y="497.9" width="2" height="2" fill="#000"/>
<rect x="1032.2" y="499.6" width="2" height="2" fill="#000"/>
<rect x="1027.6" y="510.9" width="2" height="2" fill="#000"/>
<rect x="1027.0" y="506.4" width="2" height="2" fill="#000"/>
<rect x="1046.8" y="535.4" width="2" height="2" fill="#000"/>
<rect x="1032.6" y="538.5" width="2" height="2" fill="#000"/>
<rect x="1044.5" y="547.8" width="2" height="2" fill="#000"/>
<rect x="1035.6" y="540.9" width="2" height="2" fill="#000"/>
<rect x="1034.6" y="544.0" width="2" height="2" fill="#000"/>
<rect x="1032.3" y="549.7" width="2" height="2" fill="#000"/>
<rect x="1046.7" y="555.9" width="2" height="2" fill="#000"/>
<rect x="1043.9" y="556.0" width="2" height="2" fill="#000"/>
<rect x="1031.9" y="539.9" width="2" height="2" fill="#000"/>
<rect x="1047.8" y="551.6" width="2" height="2" fill="#000"/>
<rect x="998.7" y="568.9" width="2" height="2" fill="#000"/>
<rect x="1001.7" y="566.4" width="2" height="2" fill="#000"/>
<rect x="997.1" y="553.8" width="2" height="2" fill="#000"/>
<rect x="999.2" y="552.7" width="2" height="2" fill="#000"/>
<rect x="998.3" y="569.2" width="2" height="2" fill="#000"/>
<rect x="997.6" y="550.2" width="2" height="2" fill="#000"/>
<rect x="993.6" y="553.4" width="2" height="2" fill="#000"/>
<rect x="1004.0" y="557.3" width="2" height="2" fill="#000"/>
<rect x="957.4" y="570.7" width="2" height="2" fill="#000"/>
<rect x="966.1" y="576.6" width="2" height="2" fill="#000"/>
<rect x="956.3" y="570.1" width="2" height="2" fill="#000"/>
<rect x="954.4" y="572.0" width="2" height="2" fill="#000"/>
<rect x="962.2" y="571.7" width="2" height="2" fill="#000"/>
<rect x="954.2" y="577.8" width="2" height="2" fill="#000"/>
<rect x="956.8" y="587.0" width="2" height="2" fill="#000"/>
<rect x="955.2" y="578.5" width="2" height="2" fill="#000"/>
<rect x="850.3" y="418.9" width="2" height="2" fill="#000"/>
<rect x="852.1" y="419.7" width="2" height="2" fill="#000"/>
<rect x="845.8" y="418.9" width="2" height="2" fill="#000"/>
<rect x="844.1" y="419.1" width="2" height="2" fill="#000"/>
<rect x="845.9" y="424.7" width="2" height="2" fill="#000"/>
<rect x="850.8" y="420.0" width="2" height="2" fill="#000"/>
<rect x="844.1" y="417.1" width="2" height="2" fill="#000"/>
<rect x="845.8" y="416.5" width="2" height="2" fill="#000"/>
<rect x="947.7" y="629.4" width="2" height="2" fill="#000"/>
<rect x="947.0" y="619.6" width="2" height="2" fill="#000"/>
<rect x="953.6" y="625.8" width="2" height="2" fill="#000"/>
<rect x="954.1" y="623.8" width="2" height="2" fill="#000"/>
<rect x="953.4" y="626.8" width="2" height="2" fill="#000"/>
<rect x="952.4" y="627.9" width="2" height="2" fill="#000"/>
</svg>
<!-- dialog -->
<div style="position:absolute;left:1239px;top:140px;width:429.5px;height:614.3px;background:#1273d2;box-shadow:0 1px 7px 1px rgba(20,30,45,0.55);"></div>
<div style="position:absolute;left:1239px;top:140.5px;width:428.7px;height:30px;background:#fff;"></div>
<svg style="position:absolute;left:1246px;top:145px" width="18" height="18" viewBox="0 0 18 18"><defs><radialGradient id="dgi" cx="0.45" cy="0.4" r="0.7"><stop offset="0" stop-color="#5ec1f2"/><stop offset="1" stop-color="#1182d2"/></radialGradient></defs><path d="M1 1.6 H16.6 V8.5 C16.6 13 13 16.6 8.8 17 C4.6 16.6 1 13 1 8.5 Z" fill="url(#dgi)"/><circle cx="8.8" cy="8.6" r="4.6" fill="none" stroke="#bfe6fb" stroke-width="0.7" stroke-dasharray="1.2 1"/><path d="M7.6 6.8 L10.6 8.6 L7.6 10.4 Z" fill="none" stroke="#e8f6ff" stroke-width="0.7"/></svg>
<span style="position:absolute;left:1268.3px;top:148.5px;font-size:12.4px;line-height:1;color:#8c8c8c;white-space:pre;transform-origin:0 0;transform:scaleX(0.805);">3DX_TSTv2</span>
<svg style="position:absolute;left:1540px;top:141px" width="125" height="29" viewBox="0 0 125 29"><g stroke="#7b7b7b" stroke-width="1" fill="none"><path d="M9.5 13.5 H19.5"/><rect x="54.5" y="8.5" width="9.5" height="9.5"/><path d="M100 8.5 L110 18.5 M110 8.5 L100 18.5"/></g></svg>
<div style="position:absolute;left:1239px;top:170.4px;width:428.7px;height:24px;background:#f2f2f2;"></div>
<span style="position:absolute;left:1254.0px;top:175.5px;font-size:12.6px;line-height:1;color:#000;white-space:pre;transform-origin:0 0;transform:scaleX(0.933);">Apps</span>
<span style="position:absolute;left:1300.3px;top:175.5px;font-size:12.6px;line-height:1;color:#000;white-space:pre;transform-origin:0 0;transform:scaleX(0.922);">Win</span>
<span style="position:absolute;left:1340.0px;top:175.5px;font-size:12.6px;line-height:1;color:#000;white-space:pre;transform-origin:0 0;transform:scaleX(0.918);">Tools</span>
<span style="position:absolute;left:1386.0px;top:175.5px;font-size:12.6px;line-height:1;color:#000;white-space:pre;transform-origin:0 0;transform:scaleX(0.967);">Commands</span>
<span style="position:absolute;left:1467.0px;top:175.5px;font-size:12.6px;line-height:1;color:#000;white-space:pre;transform-origin:0 0;transform:scaleX(0.857);">IAR80</span>
<div style="position:absolute;left:1508px;top:171.3px;width:53.5px;height:21.8px;background:#e1e1e1;border:1px solid #2b7cd3;"></div>
<span style="position:absolute;left:1516.5px;top:175.5px;font-size:12.6px;line-height:1;color:#000;white-space:pre;transform-origin:0 0;transform:scaleX(0.819);">Expand</span>
<div style="position:absolute;left:1567px;top:171.3px;width:58px;height:21.8px;background:#e1e1e1;border:1px solid #2b7cd3;"></div>
<span style="position:absolute;left:1574.5px;top:175.5px;font-size:12.6px;line-height:1;color:#000;white-space:pre;transform-origin:0 0;transform:scaleX(0.812);">Collapse</span>
<div style="position:absolute;left:1241.4px;top:197.3px;width:414.6px;height:18.2px;background:#f0f0f0;"></div>
<div style="position:absolute;left:1241.4px;top:197.3px;width:41.59999999999991px;height:18.2px;background:#f0f0f0;border:1px solid #d9d9d9;border-bottom:none;"></div>
<span style="position:absolute;left:1247.3px;top:200.6px;font-size:12.6px;line-height:1;color:#000;white-space:pre;transform-origin:0 0;transform:scaleX(0.784);">Param</span>
<div style="position:absolute;left:1283px;top:197.3px;width:55.299999999999955px;height:18.2px;background:#f0f0f0;border:1px solid #d9d9d9;border-bottom:none;"></div>
<span style="position:absolute;left:1289.2px;top:200.6px;font-size:12.6px;line-height:1;color:#000;white-space:pre;transform-origin:0 0;transform:scaleX(0.849);">Windows</span>
<div style="position:absolute;left:1338.3px;top:197.3px;width:42.100000000000136px;height:18.2px;background:#f0f0f0;border:1px solid #d9d9d9;border-bottom:none;"></div>
<span style="position:absolute;left:1344.5px;top:200.6px;font-size:12.6px;line-height:1;color:#000;white-space:pre;transform-origin:0 0;transform:scaleX(0.814);">Color</span>
<div style="position:absolute;left:1380.4px;top:197.3px;width:52.399999999999864px;height:18.2px;background:#f0f0f0;border:1px solid #d9d9d9;border-bottom:none;"></div>
<span style="position:absolute;left:1387.6px;top:200.6px;font-size:12.6px;line-height:1;color:#000;white-space:pre;transform-origin:0 0;transform:scaleX(0.817);">Rename</span>
<div style="position:absolute;left:1432.8px;top:197.3px;width:65.70000000000005px;height:18.2px;background:#f0f0f0;border:1px solid #d9d9d9;border-bottom:none;"></div>
<span style="position:absolute;left:1439.3px;top:200.6px;font-size:12.6px;line-height:1;color:#000;white-space:pre;transform-origin:0 0;transform:scaleX(0.870);">Hide/Show</span>
<div style="position:absolute;left:1498.5px;top:197.3px;width:41.0px;height:18.2px;background:#f0f0f0;border:1px solid #d9d9d9;border-bottom:none;"></div>
<span style="position:absolute;left:1505.0px;top:200.6px;font-size:12.6px;line-height:1;color:#000;white-space:pre;transform-origin:0 0;transform:scaleX(0.803);">Blind</span>
<div style="position:absolute;left:1600.8px;top:197.3px;width:55.200000000000045px;height:18.2px;background:#f0f0f0;border:1px solid #d9d9d9;border-bottom:none;"></div>
<span style="position:absolute;left:1605.3px;top:200.6px;font-size:12.6px;line-height:1;color:#000;white-space:pre;transform-origin:0 0;transform:scaleX(0.826);">Solid_cup</span>
<div style="position:absolute;left:1239px;top:215px;width:426.2px;height:536px;background:#e4faff;"></div>
<div style="position:absolute;left:1239px;top:215px;width:423.7px;height:534.4px;background:#fff;border:1px solid #d8d8d8;border-left:none;border-top-color:#e6e6e6;"></div>
<div style="position:absolute;left:1539.5px;top:194.6px;width:61.3px;height:21.4px;background:#fff;border:1px solid #d9d9d9;border-bottom:none;"></div>
<span style="position:absolute;left:1547.6px;top:198.5px;font-size:12.6px;line-height:1;color:#000;white-space:pre;transform-origin:0 0;transform:scaleX(0.820);">Solid_csk</span>
<span style="position:absolute;left:1264.4px;top:225.0px;font-size:14.2px;line-height:1;color:#000;white-space:pre;transform-origin:0 0;">Dia - Grip: R-G-B</span>
<div style="position:absolute;left:1250px;top:246px;width:147.8px;height:22.8px;background:#e1e1e1;border:1px solid #adadad;"></div>
<span style="position:absolute;left:1277.8px;top:251.8px;font-size:12.6px;line-height:1;color:#000;white-space:pre;transform-origin:0 0;transform:scaleX(0.844);">3,2 - 2   :255-151-0</span>
<div style="position:absolute;left:1422px;top:246px;width:56px;height:24px;background:#ff9700;border-top:1px solid #000;border-right:1px solid #000;"></div>
<div style="position:absolute;left:1503px;top:246px;width:44px;height:22.8px;background:#e1e1e1;border:1px solid #adadad;"></div>
<span style="position:absolute;left:1516.2px;top:251.8px;font-size:12.6px;line-height:1;color:#000;white-space:pre;transform-origin:0 0;transform:scaleX(0.783);">Set</span>
<div style="position:absolute;left:1572px;top:246px;width:60.8px;height:22.8px;background:#e1e1e1;border:1px solid #adadad;"></div>
<span style="position:absolute;left:1587.4px;top:251.8px;font-size:12.6px;line-height:1;color:#000;white-space:pre;transform-origin:0 0;transform:scaleX(0.828);">Select</span>
<div style="position:absolute;left:1250px;top:278px;width:147.8px;height:22.8px;background:#e1e1e1;border:1px solid #adadad;"></div>
<span style="position:absolute;left:1273.7px;top:283.8px;font-size:12.6px;line-height:1;color:#000;white-space:pre;transform-origin:0 0;transform:scaleX(0.840);">3,2 - 2,4   :255-88-88</span>
<div style="position:absolute;left:1422px;top:278px;width:57px;height:24px;background:#ff5858;border-top:1px solid #000;border-right:1px solid #000;"></div>
<div style="position:absolute;left:1503px;top:278px;width:44px;height:22.8px;background:#e1e1e1;border:1px solid #adadad;"></div>
<span style="position:absolute;left:1516.2px;top:283.8px;font-size:12.6px;line-height:1;color:#000;white-space:pre;transform-origin:0 0;transform:scaleX(0.783);">Set</span>
<div style="position:absolute;left:1572px;top:278px;width:60.8px;height:22.8px;background:#e1e1e1;border:1px solid #adadad;"></div>
<span style="position:absolute;left:1587.4px;top:283.8px;font-size:12.6px;line-height:1;color:#000;white-space:pre;transform-origin:0 0;transform:scaleX(0.828);">Select</span>
<div style="position:absolute;left:1252px;top:310px;width:147.8px;height:22.8px;background:#e1e1e1;border:1px solid #adadad;"></div>
<span style="position:absolute;left:1270.0px;top:315.8px;font-size:12.6px;line-height:1;color:#000;white-space:pre;transform-origin:0 0;transform:scaleX(0.843);">3,2 - 3,2   :180-120-200</span>
<div style="position:absolute;left:1424px;top:310px;width:53px;height:24px;background:#b478c8;border-top:1px solid #000;"></div>
<div style="position:absolute;left:1505px;top:310px;width:44px;height:22.8px;background:#e1e1e1;border:1px solid #adadad;"></div>
<span style="position:absolute;left:1518.2px;top:315.8px;font-size:12.6px;line-height:1;color:#000;white-space:pre;transform-origin:0 0;transform:scaleX(0.783);">Set</span>
<div style="position:absolute;left:1574px;top:310px;width:60.8px;height:22.8px;background:#e1e1e1;border:1px solid #adadad;"></div>
<span style="position:absolute;left:1589.4px;top:315.8px;font-size:12.6px;line-height:1;color:#000;white-space:pre;transform-origin:0 0;transform:scaleX(0.828);">Select</span>
<div style="position:absolute;left:1250px;top:342px;width:147.8px;height:22.8px;background:#e1e1e1;border:1px solid #adadad;"></div>
<span style="position:absolute;left:1271.0px;top:347.8px;font-size:12.6px;line-height:1;color:#000;white-space:pre;transform-origin:0 0;transform:scaleX(0.842);">3,2 - 3,5   :255-88-188</span>
<div style="position:absolute;left:1423px;top:342px;width:56px;height:24px;background:#ff58bc;border-top:1px solid #000;border-left:1px solid #000;"></div>
<div style="position:absolute;left:1503px;top:342px;width:44px;height:22.8px;background:#e1e1e1;border:1px solid #adadad;"></div>
<span style="position:absolute;left:1516.2px;top:347.8px;font-size:12.6px;line-height:1;color:#000;white-space:pre;transform-origin:0 0;transform:scaleX(0.783);">Set</span>
<div style="position:absolute;left:1572px;top:342px;width:60.8px;height:22.8px;background:#e1e1e1;border:1px solid #adadad;"></div>
<span style="position:absolute;left:1587.4px;top:347.8px;font-size:12.6px;line-height:1;color:#000;white-space:pre;transform-origin:0 0;transform:scaleX(0.828);">Select</span>
<div style="position:absolute;left:1250px;top:374px;width:147.8px;height:22.8px;background:#e1e1e1;border:1px solid #adadad;"></div>
<span style="position:absolute;left:1271.0px;top:379.8px;font-size:12.6px;line-height:1;color:#000;white-space:pre;transform-origin:0 0;transform:scaleX(0.842);">3,2 - 4,4   :140-88-188</span>
<div style="position:absolute;left:1425px;top:374px;width:54px;height:24px;background:#8c58bc;border-top:1px solid #000;border-left:1px solid #000;"></div>
<div style="position:absolute;left:1503px;top:374px;width:44px;height:22.8px;background:#e1e1e1;border:1px solid #adadad;"></div>
<span style="position:absolute;left:1516.2px;top:379.8px;font-size:12.6px;line-height:1;color:#000;white-space:pre;transform-origin:0 0;transform:scaleX(0.783);">Set</span>
<div style="position:absolute;left:1572px;top:374px;width:60.8px;height:22.8px;background:#e1e1e1;border:1px solid #adadad;"></div>
<span style="position:absolute;left:1587.4px;top:379.8px;font-size:12.6px;line-height:1;color:#000;white-space:pre;transform-origin:0 0;transform:scaleX(0.828);">Select</span>
<div style="position:absolute;left:1250px;top:406px;width:147.8px;height:22.8px;background:#e1e1e1;border:1px solid #adadad;"></div>
<span style="position:absolute;left:1268.0px;top:411.8px;font-size:12.6px;line-height:1;color:#000;white-space:pre;transform-origin:0 0;transform:scaleX(0.843);">3,2 - 5,1   :225-165-140</span>
<div style="position:absolute;left:1422px;top:406px;width:54px;height:24px;background:#e1a58c;border-top:1px solid #000;border-left:1px solid #000;"></div>
<div style="position:absolute;left:1503px;top:406px;width:44px;height:22.8px;background:#e1e1e1;border:1px solid #adadad;"></div>
<span style="position:absolute;left:1516.2px;top:411.8px;font-size:12.6px;line-height:1;color:#000;white-space:pre;transform-origin:0 0;transform:scaleX(0.783);">Set</span>
<div style="position:absolute;left:1572px;top:406px;width:60.8px;height:22.8px;background:#e1e1e1;border:1px solid #adadad;"></div>
<span style="position:absolute;left:1587.4px;top:411.8px;font-size:12.6px;line-height:1;color:#000;white-space:pre;transform-origin:0 0;transform:scaleX(0.828);">Select</span>
<div style="position:absolute;left:1252px;top:438px;width:147.8px;height:22.8px;background:#e1e1e1;border:1px solid #adadad;"></div>
<span style="position:absolute;left:1276.0px;top:443.8px;font-size:12.6px;line-height:1;color:#000;white-space:pre;transform-origin:0 0;transform:scaleX(0.841);">4- 6,8   :255-255-150</span>
<div style="position:absolute;left:1423.5px;top:437px;width:55.700000000000045px;height:24px;background:#ffff96;border-top:1px solid #000;"></div>
<div style="position:absolute;left:1505px;top:438px;width:44px;height:22.8px;background:#e1e1e1;border:1px solid #adadad;"></div>
<span style="position:absolute;left:1518.2px;top:443.8px;font-size:12.6px;line-height:1;color:#000;white-space:pre;transform-origin:0 0;transform:scaleX(0.783);">Set</span>
<div style="position:absolute;left:1574px;top:438px;width:60.8px;height:22.8px;background:#e1e1e1;border:1px solid #adadad;"></div>
<span style="position:absolute;left:1589.4px;top:443.8px;font-size:12.6px;line-height:1;color:#000;white-space:pre;transform-origin:0 0;transform:scaleX(0.828);">Select</span>
<div style="position:absolute;left:1250px;top:470px;width:147.8px;height:22.8px;background:#e1e1e1;border:1px solid #adadad;"></div>
<span style="position:absolute;left:1276.8px;top:475.8px;font-size:12.6px;line-height:1;color:#000;white-space:pre;transform-origin:0 0;transform:scaleX(0.842);">4- 7,4   :220-225-65</span>
<div style="position:absolute;left:1422px;top:469.8px;width:57px;height:24px;background:#dce141;border-top:1px solid #000;border-right:1px solid #000;"></div>
<div style="position:absolute;left:1503px;top:470px;width:44px;height:22.8px;background:#e1e1e1;border:1px solid #adadad;"></div>
<span style="position:absolute;left:1516.2px;top:475.8px;font-size:12.6px;line-height:1;color:#000;white-space:pre;transform-origin:0 0;transform:scaleX(0.783);">Set</span>
<div style="position:absolute;left:1572px;top:470px;width:60.8px;height:22.8px;background:#e1e1e1;border:1px solid #adadad;"></div>
<span style="position:absolute;left:1587.4px;top:475.8px;font-size:12.6px;line-height:1;color:#000;white-space:pre;transform-origin:0 0;transform:scaleX(0.828);">Select</span>
<div style="position:absolute;left:1252px;top:502px;width:147.8px;height:22.8px;background:#e1e1e1;border:1px solid #adadad;"></div>
<span style="position:absolute;left:1279.0px;top:507.8px;font-size:12.6px;line-height:1;color:#000;white-space:pre;transform-origin:0 0;transform:scaleX(0.843);">4- 8,1   :220-200-65</span>
<div style="position:absolute;left:1424.8px;top:501.3px;width:56.0px;height:24px;background:#dcc841;border-top:1px solid #000;border-left:1px solid #000;"></div>
<div style="position:absolute;left:1505px;top:502px;width:44px;height:22.8px;background:#e1e1e1;border:1px solid #adadad;"></div>
<span style="position:absolute;left:1518.2px;top:507.8px;font-size:12.6px;line-height:1;color:#000;white-space:pre;transform-origin:0 0;transform:scaleX(0.783);">Set</span>
<div style="position:absolute;left:1574px;top:502px;width:60.8px;height:22.8px;background:#e1e1e1;border:1px solid #adadad;"></div>
<span style="position:absolute;left:1589.4px;top:507.8px;font-size:12.6px;line-height:1;color:#000;white-space:pre;transform-origin:0 0;transform:scaleX(0.828);">Select</span>
<div style="position:absolute;left:1252.3px;top:661.4px;width:105.3px;height:24.8px;background:#e1e1e1;border:1px solid #adadad;"></div>
<span style="position:absolute;left:1265.0px;top:668.0px;font-size:12.6px;line-height:1;color:#000;white-space:pre;transform-origin:0 0;transform:scaleX(0.831);">Export_color_pts</span>
<div style="position:absolute;left:1366.2px;top:662.3px;width:60.5px;height:24px;background:#e1e1e1;border:1px solid #adadad;"></div>
<span style="position:absolute;left:1373.2px;top:669.3px;font-size:12.6px;line-height:1;color:#000;white-space:pre;transform-origin:0 0;transform:scaleX(0.853);">Get RGB</span>
<div style="position:absolute;left:1433px;top:662.3px;width:81.8px;height:24px;background:#e1e1e1;border:1px solid #adadad;"></div>
<span style="position:absolute;left:1439.0px;top:669.3px;font-size:12.6px;line-height:1;color:#000;white-space:pre;transform-origin:0 0;transform:scaleX(0.843);">Hide Selection</span>
<div style="position:absolute;left:1522.8px;top:662.3px;width:90.2px;height:24.3px;background:#e1e1e1;border:2px solid #0078d7;"></div>
<span style="position:absolute;left:1530.0px;top:669.3px;font-size:12.6px;line-height:1;color:#000;white-space:pre;transform-origin:0 0;transform:scaleX(0.844);">Show Selection</span>
<div style="position:absolute;left:1252.3px;top:695px;width:132.4px;height:40.5px;background:#e1e1e1;border:1px solid #adadad;"></div>
<span style="position:absolute;left:1268.2px;top:703.0px;font-size:12.6px;line-height:1;color:#000;white-space:pre;transform-origin:0 0;transform:scaleX(0.824);">Sel all pts same color</span>
<span style="position:absolute;left:1277.7px;top:715.8px;font-size:12.6px;line-height:1;color:#000;white-space:pre;transform-origin:0 0;transform:scaleX(0.849);">in Output shown</span>
<div style="position:absolute;left:1393.3px;top:695px;width:132.4px;height:40.5px;background:#e1e1e1;border:1px solid #adadad;"></div>
<span style="position:absolute;left:1424.0px;top:703.0px;font-size:12.6px;line-height:1;color:#000;white-space:pre;transform-origin:0 0;transform:scaleX(0.820);">Sel all points in</span>
<span style="position:absolute;left:1425.0px;top:715.8px;font-size:12.6px;line-height:1;color:#000;white-space:pre;transform-origin:0 0;transform:scaleX(0.857);">Output shown</span>
<!-- actionpad -->
<div style="position:absolute;left:1680.6px;top:139.2px;width:220px;height:728px;background:#dfe3e6;border-radius:3px 3px 0 0;"></div>
<div style="position:absolute;left:1681.5px;top:140px;width:218.4px;height:726.6px;background:#f0f0f0;border-radius:2px 2px 0 0;"></div>
<div style="position:absolute;left:1769.3px;top:140px;width:130.6px;height:21.4px;background:#d9d9d9;border-left:1px solid #c2c2c2;border-bottom:1px solid #c2c2c2;border-top-right-radius:2px;"></div>
<svg style="position:absolute;left:1689px;top:144.4px" width="11.4" height="13.6" viewBox="0 0 11.4 13.6"><rect x="0.5" y="0.5" width="10.4" height="12.6" fill="#fafafa" stroke="#6e6e6e" stroke-width="0.9"/><path d="M0.5 3.4 H10.9" stroke="#6e6e6e"/><g fill="#4a4a4a"><rect x="2" y="4.8" width="2" height="1.6"/><rect x="4.8" y="4.8" width="2" height="1.6"/><rect x="7.6" y="4.8" width="2" height="1.6"/><rect x="2" y="7.4" width="2" height="1.6"/><rect x="4.8" y="7.4" width="2" height="1.6"/><rect x="7.6" y="7.4" width="2" height="1.6"/><rect x="2" y="10" width="2" height="1.6"/></g></svg>
<span style="position:absolute;left:1706.4px;top:144.0px;font-size:13px;line-height:1;color:#1e1e1e;white-space:pre;transform-origin:0 0;transform:scaleX(0.892);">Action Pad</span>
<div style="position:absolute;left:1866.2px;top:152.4px;width:9.6px;height:1.8px;background:#9b9b9b;"></div>
<svg style="position:absolute;left:1883.6px;top:144.6px" width="11" height="11" viewBox="0 0 11 11"><path d="M1.2 1.2 L9.6 9.6 M9.6 1.2 L1.2 9.6" stroke="#8a8a8a" stroke-width="1.7"/></svg>
<svg style="position:absolute;left:1693.4px;top:172.6px" width="25" height="27" viewBox="0 0 25 27"><defs><linearGradient id="wcg" x1="0" y1="0" x2="1" y2="1"><stop offset="0" stop-color="#8fcde8"/><stop offset="1" stop-color="#2f87b5"/></linearGradient></defs><path d="M16 1 L16 14.6 M0.8 19.6 L16 14.6 L24.2 18.6" stroke="#222" stroke-width="1" fill="none"/><path d="M0.6 6.2 L16 1 L24.4 5 L9.4 10.6 Z M0.6 6.2 L0.8 19.6 L9.6 26.2 L24.2 18.6 L24.4 5 M9.4 10.6 L9.6 26.2" stroke="#222" stroke-width="1.1" fill="none" stroke-linejoin="round"/><path d="M0.6 6.2 L16 1 L24.4 5 L9.4 10.6 Z" fill="url(#wcg)" stroke="#0f4c6e" stroke-width="1.1" stroke-linejoin="round"/></svg>
<svg style="position:absolute;left:1729.5px;top:172.6px" width="25" height="27" viewBox="0 0 25 27"><defs><linearGradient id="wcg" x1="0" y1="0" x2="1" y2="1"><stop offset="0" stop-color="#8fcde8"/><stop offset="1" stop-color="#2f87b5"/></linearGradient></defs><path d="M16 1 L16 14.6 M0.8 19.6 L16 14.6 L24.2 18.6" stroke="#222" stroke-width="1" fill="none"/><path d="M0.6 6.2 L16 1 L16 14.6 L0.8 19.6 Z" fill="url(#wcg)" stroke="#0f4c6e" stroke-width="1"/><path d="M0.6 6.2 L16 1 L24.4 5 L9.4 10.6 Z" fill="#6fb4d6" opacity="0.0"/><path d="M0.6 6.2 L16 1 L24.4 5 L9.4 10.6 Z M0.6 6.2 L0.8 19.6 L9.6 26.2 L24.2 18.6 L24.4 5 M9.4 10.6 L9.6 26.2" stroke="#222" stroke-width="1.1" fill="none" stroke-linejoin="round"/></svg>
<svg style="position:absolute;left:1765.6000000000001px;top:172.6px" width="25" height="27" viewBox="0 0 25 27"><defs><linearGradient id="wcg" x1="0" y1="0" x2="1" y2="1"><stop offset="0" stop-color="#8fcde8"/><stop offset="1" stop-color="#2f87b5"/></linearGradient></defs><path d="M16 1 L16 14.6 M0.8 19.6 L16 14.6 L24.2 18.6" stroke="#222" stroke-width="1" fill="none"/><path d="M0.6 6.2 L16 1 L24.4 5 L9.4 10.6 Z M0.6 6.2 L0.8 19.6 L9.6 26.2 L24.2 18.6 L24.4 5 M9.4 10.6 L9.6 26.2" stroke="#222" stroke-width="1.1" fill="none" stroke-linejoin="round"/><path d="M9.4 10.6 L24.4 5 L24.2 18.6 L9.6 26.2 Z" fill="url(#wcg)" stroke="#0f4c6e" stroke-width="1.1" stroke-linejoin="round"/></svg>
<svg style="position:absolute;left:1801.7px;top:172.6px" width="25" height="27" viewBox="0 0 25 27"><defs><linearGradient id="wcg" x1="0" y1="0" x2="1" y2="1"><stop offset="0" stop-color="#8fcde8"/><stop offset="1" stop-color="#2f87b5"/></linearGradient></defs><path d="M16 1 L16 14.6 M0.8 19.6 L16 14.6 L24.2 18.6" stroke="#222" stroke-width="1" fill="none"/><path d="M0.6 6.2 L16 1 L24.4 5 L9.4 10.6 Z M0.6 6.2 L0.8 19.6 L9.6 26.2 L24.2 18.6 L24.4 5 M9.4 10.6 L9.6 26.2" stroke="#222" stroke-width="1.1" fill="none" stroke-linejoin="round"/><path d="M0.6 6.2 L9.4 10.6 L9.6 26.2 L0.8 19.6 Z" fill="url(#wcg)" stroke="#0f4c6e" stroke-width="1.1" stroke-linejoin="round"/></svg>
<svg style="position:absolute;left:1837.8000000000002px;top:172.6px" width="25" height="27" viewBox="0 0 25 27"><defs><linearGradient id="wcg" x1="0" y1="0" x2="1" y2="1"><stop offset="0" stop-color="#8fcde8"/><stop offset="1" stop-color="#2f87b5"/></linearGradient></defs><path d="M16 1 L16 14.6 M0.8 19.6 L16 14.6 L24.2 18.6" stroke="#222" stroke-width="1" fill="none"/><path d="M16 1 L24.4 5 L24.2 18.6 L16 14.6 Z" fill="url(#wcg)" stroke="#0f4c6e" stroke-width="1"/><path d="M0.6 6.2 L16 1 L24.4 5 L9.4 10.6 Z M0.6 6.2 L0.8 19.6 L9.6 26.2 L24.2 18.6 L24.4 5 M9.4 10.6 L9.6 26.2" stroke="#222" stroke-width="1.1" fill="none" stroke-linejoin="round"/></svg>
<div style="position:absolute;left:1688.3px;top:203.5px;width:205px;height:1.1px;background:#bdbdbd;"></div>
<div style="position:absolute;left:1688.3px;top:243.7px;width:205px;height:1.1px;background:#bdbdbd;"></div>
<div style="position:absolute;left:1688.3px;top:353.7px;width:205px;height:1.1px;background:#bdbdbd;"></div>
<div style="position:absolute;left:1688.3px;top:393.8px;width:205px;height:1.1px;background:#bdbdbd;"></div>
<div style="position:absolute;left:1688.3px;top:433.7px;width:205px;height:1.1px;background:#bdbdbd;"></div>
<svg style="position:absolute;left:1693px;top:212px" width="26" height="28" viewBox="0 0 26 28"><rect x="0.6" y="0.6" width="17" height="17" fill="#fbfbfb" stroke="#1f4e6b" stroke-width="1"/><rect x="0.6" y="0.6" width="17" height="3" fill="#7fb7d4" stroke="#1f4e6b" stroke-width="0.8"/><g fill="#2f7fae" stroke="#1f4e6b" stroke-width="0.5"><rect x="2.6" y="6" width="3.6" height="1.8"/><rect x="2.6" y="10" width="3.6" height="1.8"/><rect x="2.6" y="14" width="3.6" height="1.8"/></g><path d="M7.6 6.9 H15.6 M7.6 10.9 H15.6 M7.6 14.9 H15.6" stroke="#555" stroke-width="0.8"/><path d="M14.4 13.6 L14.4 25 L17.4 22.4 L19.6 27 L21.6 26 L19.6 21.6 L23.4 21.4 Z" fill="#fff" stroke="#333" stroke-width="0.9"/></svg>
<div style="position:absolute;left:1735px;top:218.2px;width:14px;height:13.6px;background:#b1b1b1;"></div>
<div style="position:absolute;left:1770.8px;top:217.8px;width:14.4px;height:14.4px;background:#dd2a00;border-radius:8px;"></div>
<svg style="position:absolute;left:1800.6px;top:213.2px" width="28" height="27" viewBox="0 0 28 27"><defs><radialGradient id="gg" cx="0.4" cy="0.4" r="0.7"><stop offset="0" stop-color="#6fb0d4"/><stop offset="1" stop-color="#245f85"/></radialGradient></defs>
<circle cx="11.6" cy="11.6" r="9.6" fill="url(#gg)" stroke="#173f5a" stroke-width="3.2" stroke-dasharray="3.2 2.4"/><circle cx="11.6" cy="11.6" r="8.4" fill="url(#gg)"/><path d="M9 2 A10 10 0 0 1 22 9" stroke="#eef3f6" stroke-width="3" fill="none" stroke-dasharray="2.6 2"/><circle cx="11.2" cy="12" r="4.4" fill="#7d8a92" stroke="#173f5a"/>
<circle cx="21" cy="20.6" r="5" fill="url(#gg)" stroke="#173f5a" stroke-width="2.2" stroke-dasharray="2 1.6"/><circle cx="21" cy="20.6" r="4.2" fill="url(#gg)"/><circle cx="21" cy="20.6" r="1.9" fill="#8a969d" stroke="#173f5a" stroke-width="0.7"/></svg>
<svg style="position:absolute;left:1691.8px;top:251.8px" width="28.4" height="28.4" viewBox="0 0 28.4 28.4"><defs><linearGradient id="sqg" x1="0" y1="0" x2="1" y2="1"><stop offset="0" stop-color="#8fd0ea"/><stop offset="1" stop-color="#3f9cc6"/></linearGradient></defs><rect x="0.6" y="0.6" width="13.4" height="13.2" fill="url(#sqg)" stroke="#1d5f84" stroke-width="1"/><rect x="14.4" y="14.6" width="13.2" height="13" fill="url(#sqg)" stroke="#1d5f84" stroke-width="1"/><path d="M16.6 2.2 L24 9.6" stroke="#222" stroke-width="2"/><path d="M27 12.6 L27 4.6 L19.4 12.2 Z" fill="#222"/></svg>
<svg style="position:absolute;left:1728.6px;top:253px" width="27" height="27" viewBox="0 0 27 27"><defs><radialGradient id="mg" cx="0.5" cy="0.5" r="0.6"><stop offset="0" stop-color="#fff"/><stop offset="1" stop-color="#d9dfe3"/></radialGradient></defs><path d="M10.4 16.4 L2.4 24.2" stroke="#1d5f84" stroke-width="4.4" stroke-linecap="round"/><path d="M10.4 16.4 L2.6 24" stroke="#6fb4d6" stroke-width="2.2" stroke-linecap="round"/><circle cx="17.2" cy="9.4" r="8.4" fill="url(#mg)" stroke="#444" stroke-width="1.2"/><g fill="#222"><path d="M17.2 2.8 L19.6 6 H14.8 Z"/><path d="M17.2 16 L19.6 12.8 H14.8 Z"/><path d="M10.6 9.4 L13.8 7 V11.8 Z"/><path d="M23.8 9.4 L20.6 7 V11.8 Z"/></g></svg>
<div style="position:absolute;left:1761.3px;top:249.3px;width:33.6px;height:33.5px;background:#cfe5f9;border:1px solid #4f93d8;border-radius:3px;"></div>
<svg style="position:absolute;left:1764px;top:251px" width="29" height="30" viewBox="0 0 29 30"><path d="M6 3 L9 1 L13 3 L10 5 Z" fill="none" stroke="#777" stroke-width="0.9"/><path d="M4.4 4.6 L7.4 2.6 L11.4 4.6 L8.4 6.6 Z" fill="#e9e9e9" stroke="#777" stroke-width="0.9"/><rect x="2.6" y="10" width="23" height="17" fill="#eaf2f9" stroke="#c8232c" stroke-width="1.6"/><path d="M18 10 V7.6 H24 V10" fill="none" stroke="#c8232c" stroke-width="1.4"/><path d="M17 13 H22" stroke="#7a8a96" stroke-width="1"/><ellipse cx="11.4" cy="18.6" rx="6.6" ry="4.2" transform="rotate(-25 11.4 18.6)" fill="#7a0e12" stroke="#4a0508"/><ellipse cx="10.6" cy="19" rx="2.2" ry="1.4" transform="rotate(-25 10.6 19)" fill="#b0363c"/><path d="M18 18 L24 24" stroke="#c8232c" stroke-width="2.6"/><path d="M26.4 26.8 V20.4 L20.2 26.6 Z" fill="#e8474f" stroke="#c8232c" stroke-width="0.8"/></svg>
<span style="position:absolute;left:1696.2px;top:294.6px;font-size:12.6px;line-height:1;color:#1e1e1e;white-space:pre;transform-origin:0 0;transform:scaleX(0.958);">Open in New App</span>
<span style="position:absolute;left:1806.5px;top:294.6px;font-size:12.6px;line-height:1;color:#1e1e1e;white-space:pre;transform-origin:0 0;transform:scaleX(0.887);">Reframe On</span>
<svg style="position:absolute;left:1693px;top:320.5px" width="28" height="31" viewBox="0 0 28 31"><path d="M1 1 V30 M1 2 H5 M1 27 H5 M1 30 H5" stroke="#777" stroke-width="0.9" fill="none"/><rect x="5" y="0.6" width="8.4" height="2.8" fill="#8a8a8a"/><rect x="5" y="25.6" width="8.4" height="2.6" fill="#8a8a8a"/><rect x="5" y="28.8" width="8.4" height="2" fill="#8a8a8a"/><path d="M7 6 V20.6 H15 M7 8.6 H11 M7 14.6 H15" stroke="#1f5878" stroke-width="1.2" fill="none"/><g fill="#fff" stroke="#1f5878" stroke-width="1.1"><rect x="11.4" y="6.6" width="11" height="3.6" rx="1.6"/><rect x="15.4" y="12.6" width="11" height="3.6" rx="1.6"/><rect x="15.4" y="18.6" width="11" height="3.6" rx="1.6"/></g><path d="M21.4 0.6 V4.2 M19.4 2.8 L21.4 5 L23.4 2.8" stroke="#1f5878" stroke-width="1.1" fill="none"/><path d="M21.4 29 V25.2 M19.4 26.8 L21.4 24.6 L23.4 26.8" stroke="#1f5878" stroke-width="1.1" fill="none"/></svg>
<svg style="position:absolute;left:1691px;top:361.6px" width="29" height="28" viewBox="0 0 29 28"><path d="M14.4 0.8 L18 10.4 L28.2 10.8 L20.2 17 L23 27 L14.4 21.2 L5.8 27 L8.6 17 L0.6 10.8 L10.8 10.4 Z" fill="#b3b3b3"/></svg>
<svg style="position:absolute;left:1727.6px;top:363.4px" width="29" height="25" viewBox="0 0 29 25"><defs><linearGradient id="cmg" x1="0" y1="0" x2="0" y2="1"><stop offset="0" stop-color="#fafafa"/><stop offset="1" stop-color="#cfcfcf"/></linearGradient></defs><path d="M8.6 4.4 L10.4 1.4 H18.6 L20.4 4.4" fill="url(#cmg)" stroke="#444"/><rect x="0.6" y="4.4" width="27.4" height="19.6" rx="2.6" fill="url(#cmg)" stroke="#444"/><rect x="2" y="6.4" width="4" height="15.6" rx="1.6" fill="#e9e9e9" stroke="#777" stroke-width="0.7"/><circle cx="16.4" cy="14.4" r="7.6" fill="#e4e4e4" stroke="#444"/><circle cx="16.4" cy="14.4" r="5.2" fill="#8c8c8c" stroke="#444" stroke-width="0.8"/><circle cx="17.4" cy="15.4" r="2.8" fill="#5e5e5e"/><circle cx="25" cy="7.6" r="0.9" fill="#666"/></svg>
<svg style="position:absolute;left:1763.6px;top:361.8px" width="30" height="29" viewBox="0 0 30 29"><path d="M0.6 0.8 H11 V16.6 L5.8 12 L0.6 16.6 Z" fill="#4f9fc9" stroke="#1a5478" stroke-width="1.1"/><path d="M11 4.6 H20 M15 4.6 V21.6 H21" stroke="#222" stroke-width="1.6" fill="none"/><path d="M20.6 0.8 H27.2 V10.4 L23.9 7.6 L20.6 10.4 Z" fill="#fff" stroke="#333" stroke-width="1"/><path d="M21.6 17.8 H28.2 V27.6 L24.9 24.8 L21.6 27.6 Z" fill="#fff" stroke="#333" stroke-width="1"/></svg>
<span style="position:absolute;left:1804.6px;top:368.5px;font-size:12.6px;line-height:1;color:#1e1e1e;white-space:pre;transform-origin:0 0;transform:scaleX(0.887);">Reframe On</span>
<span style="position:absolute;left:1696.2px;top:408.3px;font-size:12.6px;line-height:1;color:#1e1e1e;white-space:pre;transform-origin:0 0;transform:scaleX(0.917);">Collapse All</span>
<span style="position:absolute;left:1773.4px;top:408.3px;font-size:12.6px;line-height:1;color:#1e1e1e;white-space:pre;transform-origin:0 0;transform:scaleX(0.894);">Reset Robot</span>
<svg style="position:absolute;left:1847.8px;top:401.6px" width="28.4" height="28.4" viewBox="0 0 28.4 28.4"><defs><linearGradient id="sqg" x1="0" y1="0" x2="1" y2="1"><stop offset="0" stop-color="#8fd0ea"/><stop offset="1" stop-color="#3f9cc6"/></linearGradient></defs><rect x="0.6" y="0.6" width="13.4" height="13.2" fill="url(#sqg)" stroke="#1d5f84" stroke-width="1"/><rect x="14.4" y="14.6" width="13.2" height="13" fill="url(#sqg)" stroke="#1d5f84" stroke-width="1"/><path d="M16.6 2.2 L24 9.6" stroke="#222" stroke-width="2"/><path d="M27 12.6 L27 4.6 L19.4 12.2 Z" fill="#222"/></svg>
<div style="position:absolute;left:1761.2px;top:439px;width:33.8px;height:33.8px;background:#cfe5f9;border:1px solid #4f93d8;border-radius:3px;"></div>
<svg style="position:absolute;left:1696.6px;top:443.6px" width="18.6" height="24.6" viewBox="0 0 18.6 24.6"><defs><linearGradient id="cyg" x1="0" y1="0" x2="1" y2="0"><stop offset="0" stop-color="#c8c8c8"/><stop offset="0.45" stop-color="#ffffff"/><stop offset="1" stop-color="#bdbdbd"/></linearGradient><linearGradient id="cyd" x1="0" y1="0" x2="1" y2="0"><stop offset="0" stop-color="#8a8a8a"/><stop offset="0.5" stop-color="#dedede"/><stop offset="1" stop-color="#8a8a8a"/></linearGradient></defs><path d="M0.7 4.4 V20 A8.6 3.8 0 0 0 17.9 20 V4.4 Z" fill="url(#cyd)" stroke="#3a3a3a" stroke-width="1"/><path d="M2 8 L5 11 L8 8 L11 11 L14 8 L17 11 M2 13 L5 16 L8 13 L11 16 L14 13 L17 16 M2 18 L5 21 L8 18 L11 21 L14 18 L17 21" stroke="#777" stroke-width="1.6" fill="none"/><ellipse cx="9.3" cy="4.4" rx="8.6" ry="3.6" fill="#d9d9d9" stroke="#3a3a3a" stroke-width="1"/></svg>
<svg style="position:absolute;left:1732.7px;top:443.6px" width="18.6" height="24.6" viewBox="0 0 18.6 24.6"><defs><linearGradient id="cyg" x1="0" y1="0" x2="1" y2="0"><stop offset="0" stop-color="#c8c8c8"/><stop offset="0.45" stop-color="#ffffff"/><stop offset="1" stop-color="#bdbdbd"/></linearGradient><linearGradient id="cyd" x1="0" y1="0" x2="1" y2="0"><stop offset="0" stop-color="#8a8a8a"/><stop offset="0.5" stop-color="#dedede"/><stop offset="1" stop-color="#8a8a8a"/></linearGradient></defs><path d="M0.7 4.4 V20 A8.6 3.8 0 0 0 17.9 20 V4.4 Z" fill="url(#cyd)" stroke="#4a7a99" stroke-width="1"/><path d="M2 8 L5 11 L8 8 L11 11 L14 8 L17 11 M2 13 L5 16 L8 13 L11 16 L14 13 L17 16 M2 18 L5 21 L8 18 L11 21 L14 18 L17 21" stroke="#777" stroke-width="1.6" fill="none"/><ellipse cx="9.3" cy="4.4" rx="8.6" ry="3.6" fill="#d9d9d9" stroke="#4a7a99" stroke-width="1"/></svg>
<svg style="position:absolute;left:1768.7px;top:443.6px" width="18.6" height="24.6" viewBox="0 0 18.6 24.6"><defs><linearGradient id="cyg" x1="0" y1="0" x2="1" y2="0"><stop offset="0" stop-color="#c8c8c8"/><stop offset="0.45" stop-color="#ffffff"/><stop offset="1" stop-color="#bdbdbd"/></linearGradient><linearGradient id="cyd" x1="0" y1="0" x2="1" y2="0"><stop offset="0" stop-color="#8a8a8a"/><stop offset="0.5" stop-color="#dedede"/><stop offset="1" stop-color="#8a8a8a"/></linearGradient></defs><path d="M0.7 4.4 V20 A8.6 3.8 0 0 0 17.9 20 V4.4 Z" fill="url(#cyg)" stroke="#3a4a55" stroke-width="1"/><ellipse cx="9.3" cy="4.4" rx="8.6" ry="3.6" fill="#fbfbfb" stroke="#3a4a55" stroke-width="1"/><path d="M9.3 8 V23.6" stroke="#3a4a55" stroke-width="1"/></svg>
<svg style="position:absolute;left:1804.6px;top:443.6px" width="18.6" height="24.6" viewBox="0 0 18.6 24.6"><defs><linearGradient id="cyg" x1="0" y1="0" x2="1" y2="0"><stop offset="0" stop-color="#c8c8c8"/><stop offset="0.45" stop-color="#ffffff"/><stop offset="1" stop-color="#bdbdbd"/></linearGradient><linearGradient id="cyd" x1="0" y1="0" x2="1" y2="0"><stop offset="0" stop-color="#8a8a8a"/><stop offset="0.5" stop-color="#dedede"/><stop offset="1" stop-color="#8a8a8a"/></linearGradient></defs><path d="M0.7 4.4 V20 A8.6 3.8 0 0 0 17.9 20 V4.4 Z" fill="url(#cyg)" stroke="#555" stroke-width="1"/><ellipse cx="9.3" cy="4.4" rx="8.6" ry="3.6" fill="#fbfbfb" stroke="#555" stroke-width="1"/></svg>
<!-- toolbar -->
<div style="position:absolute;left:714px;top:916px;width:500.4px;height:22px;background:#dcdcdc;border-radius:3px 3px 0 0;"></div>
<div style="position:absolute;left:714px;top:916px;width:59px;height:22px;background:#f0f0f0;border-right:1px solid #b9b9b9;border-radius:3px 0 0 0;"></div>
<span style="position:absolute;left:720.4px;top:920.4px;font-size:13.2px;line-height:1;color:#2a2a2a;white-space:pre;transform-origin:0 0;transform:scaleX(0.862);">Standard</span>
<div style="position:absolute;left:773px;top:916px;width:60.5px;height:22px;background:#f0f0f0;border-right:1px solid #b9b9b9;"></div>
<span style="position:absolute;left:779.6px;top:920.4px;font-size:13.2px;line-height:1;color:#2a2a2a;white-space:pre;transform-origin:0 0;transform:scaleX(0.903);">Lifecycle</span>
<div style="position:absolute;left:833.5px;top:916px;width:83.79999999999995px;height:22px;background:#dcdcdc;border-right:1px solid #b9b9b9;"></div>
<span style="position:absolute;left:840.0px;top:920.4px;font-size:13.2px;line-height:1;color:#2a2a2a;white-space:pre;transform-origin:0 0;transform:scaleX(0.905);">Collaboration</span>
<div style="position:absolute;left:917.3px;top:916px;width:126.20000000000005px;height:22px;background:#dcdcdc;border-right:1px solid #b9b9b9;"></div>
<span style="position:absolute;left:924.0px;top:920.4px;font-size:13.2px;line-height:1;color:#2a2a2a;white-space:pre;transform-origin:0 0;transform:scaleX(0.942);">Product Modification</span>
<div style="position:absolute;left:1043.5px;top:916px;width:38.0px;height:22px;background:#dcdcdc;border-right:1px solid #b9b9b9;"></div>
<span style="position:absolute;left:1050.0px;top:920.4px;font-size:13.2px;line-height:1;color:#2a2a2a;white-space:pre;transform-origin:0 0;transform:scaleX(0.867);">View</span>
<div style="position:absolute;left:1081.5px;top:916px;width:48.0px;height:22px;background:#dcdcdc;border-right:1px solid #b9b9b9;"></div>
<span style="position:absolute;left:1088.0px;top:920.4px;font-size:13.2px;line-height:1;color:#2a2a2a;white-space:pre;transform-origin:0 0;transform:scaleX(0.833);">AR-VR</span>
<div style="position:absolute;left:1129.5px;top:916px;width:39.90000000000009px;height:22px;background:#dcdcdc;border-right:1px solid #b9b9b9;"></div>
<span style="position:absolute;left:1136.0px;top:920.4px;font-size:13.2px;line-height:1;color:#2a2a2a;white-space:pre;transform-origin:0 0;transform:scaleX(0.870);">Tools</span>
<div style="position:absolute;left:1169.4px;top:916px;width:45.0px;height:22px;background:#dcdcdc;border-right:1px solid #b9b9b9;border-radius:0 3px 0 0;border-right:none;"></div>
<span style="position:absolute;left:1176.2px;top:920.4px;font-size:13.2px;line-height:1;color:#2a2a2a;white-space:pre;transform-origin:0 0;transform:scaleX(0.891);">Touch</span>
<svg style="position:absolute;left:714px;top:916px" width="7" height="7" viewBox="0 0 7 7"><path d="M0 6.4 V2.4 Q0 0 2.4 0 H6.4 Z" fill="#3c8fd0"/></svg>
<div style="position:absolute;left:73px;top:937.4px;width:1763.8px;height:80px;background:#f0f0f0;border-radius:4px 0 0 0;"></div>
<div style="position:absolute;left:92px;top:937.4px;width:1px;height:79px;background:#8f8f8f;"></div>
<svg style="position:absolute;left:79px;top:945px" width="9" height="5" viewBox="0 0 9 5"><path d="M0.6 0.6 L4.4 3.8 L8.2 0.6" fill="none" stroke="#666" stroke-width="1.1"/></svg>
<div style="position:absolute;left:623.3px;top:938.4px;width:1px;height:78px;background:#a9a9a9;"></div>
<div style="position:absolute;left:441.4px;top:941.8px;width:1px;height:68px;background:#c9c9c9;"></div>
<div style="position:absolute;left:525.2px;top:941.8px;width:1px;height:68px;background:#c9c9c9;"></div>
<div style="position:absolute;left:867.4px;top:941.8px;width:1px;height:68px;background:#c9c9c9;"></div>
<div style="position:absolute;left:1188.4px;top:941.8px;width:1px;height:68px;background:#c9c9c9;"></div>
<div style="position:absolute;left:1352px;top:941.8px;width:1px;height:68px;background:#c9c9c9;"></div>
<div style="position:absolute;left:1593.4px;top:941.8px;width:1px;height:68px;background:#c9c9c9;"></div>
<svg style="position:absolute;left:334.6px;top:975.2px" width="8" height="4.4" viewBox="0 0 8 4.4"><path d="M0 0 H8 L4 4.2 Z" fill="#8c8c8c"/></svg>
<svg style="position:absolute;left:426.7px;top:975.2px" width="8" height="4.4" viewBox="0 0 8 4.4"><path d="M0 0 H8 L4 4.2 Z" fill="#8c8c8c"/></svg>
<svg style="position:absolute;left:607.6px;top:975.2px" width="8" height="4.4" viewBox="0 0 8 4.4"><path d="M0 0 H8 L4 4.2 Z" fill="#8c8c8c"/></svg>
<svg style="position:absolute;left:121px;top:946.4px" width="32" height="27" viewBox="0 0 32 27"><defs><linearGradient id="tbb" x1="0" y1="0" x2="1" y2="1"><stop offset="0" stop-color="#8fd0ea"/><stop offset="1" stop-color="#2f86b4"/></linearGradient><linearGradient id="tbp" x1="0" y1="0" x2="1" y2="1"><stop offset="0" stop-color="#ffffff"/><stop offset="1" stop-color="#d4d4d4"/></linearGradient></defs><path d="M12 10 L30.6 6 L30.8 7.4 L15 15 Z" fill="#f4f4f4" stroke="#555" stroke-width="0.9"/><path d="M12 17.4 L30.6 21 L30.8 19.8 L15 12.4 Z" fill="#f4f4f4" stroke="#555" stroke-width="0.9"/><circle cx="7" cy="6.4" r="4.6" fill="none" stroke="#2a79a8" stroke-width="3"/><circle cx="7" cy="20.6" r="4.6" fill="none" stroke="#2a79a8" stroke-width="3"/><path d="M9.6 9.6 L16 14 M9.6 17.4 L16 13.4" stroke="#2a79a8" stroke-width="3"/><circle cx="7" cy="6.4" r="4.6" fill="none" stroke="#6fb8dc" stroke-width="1.2"/><circle cx="7" cy="20.6" r="4.6" fill="none" stroke="#6fb8dc" stroke-width="1.2"/></svg>
<span style="position:absolute;left:128.0px;top:980.0px;font-size:11.8px;line-height:1;color:#4d4d4d;white-space:pre;transform-origin:0 0;transform:scaleX(0.915);">Cut</span>
<svg style="position:absolute;left:201.6px;top:944.2px" width="29" height="30" viewBox="0 0 29 30"><defs><linearGradient id="tbb" x1="0" y1="0" x2="1" y2="1"><stop offset="0" stop-color="#8fd0ea"/><stop offset="1" stop-color="#2f86b4"/></linearGradient><linearGradient id="tbp" x1="0" y1="0" x2="1" y2="1"><stop offset="0" stop-color="#ffffff"/><stop offset="1" stop-color="#d4d4d4"/></linearGradient></defs><path d="M0.8 0.8 H10.6 L16.4 6.6 V19.8 H0.8 Z" fill="url(#tbp)" stroke="#444" stroke-width="1"/><path d="M10.6 0.8 V6.6 H16.4" fill="#e0e0e0" stroke="#444" stroke-width="0.9"/><path d="M11.6 9.8 H22 L27.8 15.6 V28.8 H11.6 Z" fill="url(#tbb)" stroke="#164f70" stroke-width="1.1"/><path d="M22 9.8 V15.6 H27.8" fill="#9fd6ee" stroke="#164f70" stroke-width="0.9"/></svg>
<span style="position:absolute;left:203.4px;top:980.0px;font-size:11.8px;line-height:1;color:#4d4d4d;white-space:pre;transform-origin:0 0;transform:scaleX(0.875);">Copy</span>
<svg style="position:absolute;left:280.6px;top:945.6px" width="28" height="30" viewBox="0 0 28 30"><g opacity="0.55"><defs><linearGradient id="tbb" x1="0" y1="0" x2="1" y2="1"><stop offset="0" stop-color="#8fd0ea"/><stop offset="1" stop-color="#2f86b4"/></linearGradient><linearGradient id="tbp" x1="0" y1="0" x2="1" y2="1"><stop offset="0" stop-color="#ffffff"/><stop offset="1" stop-color="#d4d4d4"/></linearGradient></defs><rect x="0.8" y="3.6" width="19.6" height="22" rx="1.6" fill="#e9e9e9" stroke="#8a8a8a"/><path d="M5.6 3.6 V1.6 Q10.6 -0.6 15.6 1.6 V3.6 Z" fill="#dcdcdc" stroke="#8a8a8a" stroke-width="0.9"/><path d="M11 10.4 H21 L26.6 16 V28.8 H11 Z" fill="#b9d6e6" stroke="#7a9fb4" stroke-width="1"/><path d="M21 10.4 V16 H26.6" fill="#e2eef5" stroke="#7a9fb4" stroke-width="0.9"/></g></svg>
<span style="position:absolute;left:280.2px;top:980.8px;font-size:11.8px;line-height:1;color:#b2b2b2;white-space:pre;transform-origin:0 0;transform:scaleX(0.875);">Paste</span>
<svg style="position:absolute;left:372px;top:948.4px" width="28" height="25" viewBox="0 0 28 25"><defs><linearGradient id="tbb" x1="0" y1="0" x2="1" y2="1"><stop offset="0" stop-color="#8fd0ea"/><stop offset="1" stop-color="#2f86b4"/></linearGradient><linearGradient id="tbp" x1="0" y1="0" x2="1" y2="1"><stop offset="0" stop-color="#ffffff"/><stop offset="1" stop-color="#d4d4d4"/></linearGradient></defs><path d="M10.4 12.2 C15.6 10.4 19.6 13 18.6 17 C18.2 19 17 20.4 15.4 21.4 L18.2 24 C23.4 21.2 26.6 15.6 24.4 9.8 C22 4.4 15 2.6 8.6 6.2 L5.6 1.8 L1 13 L13.2 13.6 Z" fill="url(#tbb)" stroke="#17587c" stroke-width="1.1" stroke-linejoin="round"/></svg>
<span style="position:absolute;left:371.5px;top:979.8px;font-size:13px;line-height:1;color:#3c3c3c;white-space:pre;transform-origin:0 0;transform:scaleX(0.907);">Undo</span>
<svg style="position:absolute;left:468.6px;top:947.6px" width="31" height="26" viewBox="0 0 31 26"><rect x="0.6" y="5.4" width="29" height="10.6" rx="1.4" fill="#f8f8f8" stroke="#a0a0a0" stroke-width="0.9"/><rect x="12.6" y="8.6" width="4.2" height="4.2" fill="#2b7fb0"/><rect x="24.6" y="7.6" width="2" height="6" fill="#b5b5b5"/><rect x="3" y="7.6" width="2" height="6" fill="#d5d5d5"/><circle cx="14" cy="10.4" r="8.4" fill="none" stroke="#111" stroke-width="2.2"/><path d="M19.8 16.8 L26 23.6" stroke="#111" stroke-width="3.2" stroke-linecap="round"/></svg>
<span style="position:absolute;left:458.8px;top:979.5px;font-size:11.8px;line-height:1;color:#4d4d4d;white-space:pre;transform-origin:0 0;transform:scaleX(0.902);">Command</span>
<span style="position:absolute;left:464.2px;top:992.6px;font-size:11.8px;line-height:1;color:#4d4d4d;white-space:pre;transform-origin:0 0;transform:scaleX(0.813);">Search...</span>
<svg style="position:absolute;left:553.6px;top:946.2px" width="27" height="27" viewBox="0 0 27 27"><defs><linearGradient id="tbb" x1="0" y1="0" x2="1" y2="1"><stop offset="0" stop-color="#8fd0ea"/><stop offset="1" stop-color="#2f86b4"/></linearGradient><linearGradient id="tbp" x1="0" y1="0" x2="1" y2="1"><stop offset="0" stop-color="#ffffff"/><stop offset="1" stop-color="#d4d4d4"/></linearGradient></defs><g fill="url(#tbb)" stroke="#17587c" stroke-width="1" stroke-linejoin="round"><path d="M11.9 0.9 L10.7 1.1 L9.6 1.4 L8.5 1.8 L7.4 2.3 L6.4 2.9 L5.4 3.6 L4.5 4.4 L3.7 5.3 L1.6 3.5 L3.3 13.0 L9.9 10.4 L7.6 8.5 L8.1 8.0 L8.6 7.5 L9.2 7.1 L9.8 6.7 L10.4 6.4 L11.1 6.2 L11.8 6.0 L12.5 5.9 Z"/><path d="M0.9 14.9 L1.1 16.1 L1.4 17.2 L1.8 18.3 L2.3 19.4 L2.9 20.4 L3.6 21.4 L4.4 22.3 L5.3 23.1 L3.5 25.2 L13.0 23.5 L10.4 16.9 L8.5 19.2 L8.0 18.7 L7.5 18.2 L7.1 17.6 L6.7 17.0 L6.4 16.4 L6.2 15.7 L6.0 15.0 L5.9 14.3 Z"/><path d="M14.9 25.9 L16.1 25.7 L17.2 25.4 L18.3 25.0 L19.4 24.5 L20.4 23.9 L21.4 23.2 L22.3 22.4 L23.1 21.5 L25.2 23.3 L23.5 13.8 L16.9 16.4 L19.2 18.3 L18.7 18.8 L18.2 19.3 L17.6 19.7 L17.0 20.1 L16.4 20.4 L15.7 20.6 L15.0 20.8 L14.3 20.9 Z"/><path d="M25.9 11.9 L25.7 10.7 L25.4 9.6 L25.0 8.5 L24.5 7.4 L23.9 6.4 L23.2 5.4 L22.4 4.5 L21.5 3.7 L23.3 1.6 L13.8 3.3 L16.4 9.9 L18.3 7.6 L18.8 8.1 L19.3 8.6 L19.7 9.2 L20.1 9.8 L20.4 10.4 L20.6 11.1 L20.8 11.8 L20.9 12.5 Z"/></g></svg>
<span style="position:absolute;left:547.8px;top:979.7px;font-size:13px;line-height:1;color:#3c3c3c;white-space:pre;transform-origin:0 0;transform:scaleX(0.899);">Update</span>
<svg style="position:absolute;left:656.8px;top:945.8px" width="23" height="29" viewBox="0 0 23 29"><defs><linearGradient id="tbb" x1="0" y1="0" x2="1" y2="1"><stop offset="0" stop-color="#8fd0ea"/><stop offset="1" stop-color="#2f86b4"/></linearGradient><linearGradient id="tbp" x1="0" y1="0" x2="1" y2="1"><stop offset="0" stop-color="#ffffff"/><stop offset="1" stop-color="#d4d4d4"/></linearGradient></defs><path d="M7.4 0.8 H21.6 V27.6 H0.8 V7.4 Z" fill="url(#tbp)" stroke="#444" stroke-width="1"/><path d="M7.4 0.8 V7.4 H0.8" fill="#f6f6f6" stroke="#444" stroke-width="0.9"/></svg>
<span style="position:absolute;left:656.9px;top:979.5px;font-size:11.8px;line-height:1;color:#4d4d4d;white-space:pre;transform-origin:0 0;transform:scaleX(0.907);">New</span>
<span style="position:absolute;left:648.4px;top:992.6px;font-size:11.8px;line-height:1;color:#4d4d4d;white-space:pre;transform-origin:0 0;transform:scaleX(0.934);">Content</span>
<svg style="position:absolute;left:732px;top:944.6px" width="31" height="31" viewBox="0 0 31 31"><defs><linearGradient id="tbb" x1="0" y1="0" x2="1" y2="1"><stop offset="0" stop-color="#8fd0ea"/><stop offset="1" stop-color="#2f86b4"/></linearGradient><linearGradient id="tbp" x1="0" y1="0" x2="1" y2="1"><stop offset="0" stop-color="#ffffff"/><stop offset="1" stop-color="#d4d4d4"/></linearGradient></defs><path d="M4.6 12 C5.6 6 10 2.6 15.6 2.6 C20 2.6 23.4 4.8 25.2 8" fill="none" stroke="#8a8a8a" stroke-width="2.6"/><path d="M22 9.6 L28.4 10.4 L27.6 4 Z" fill="#fff" stroke="#8a8a8a"/><path d="M26.4 19 C25.4 25 21 28.4 15.4 28.4 C11 28.4 7.6 26.2 5.8 23" fill="none" stroke="#8a8a8a" stroke-width="2.6"/><path d="M9 21.4 L2.6 20.6 L3.4 27 Z" fill="#fff" stroke="#8a8a8a"/><g fill="url(#tbb)" stroke="#17587c" stroke-width="0.9"><path d="M0.8 11.8 H6.4 L9.4 15.4 L6.4 19 H0.8 L3.8 15.4 Z"/><path d="M8.4 11.8 H14 L17 15.4 L14 19 H8.4 L11.4 15.4 Z"/><path d="M16 11.8 H21.6 L24.6 15.4 L21.6 19 H16 L19 15.4 Z"/><path d="M23.6 11.8 H27.6 L30.4 15.4 L27.6 19 H23.6 L26.6 15.4 Z"/></g></svg>
<span style="position:absolute;left:725.6px;top:979.5px;font-size:11.8px;line-height:1;color:#4d4d4d;white-space:pre;transform-origin:0 0;">Maturity</span>
<svg style="position:absolute;left:812.8px;top:945.6px" width="30" height="30" viewBox="0 0 30 30"><defs><linearGradient id="tbb" x1="0" y1="0" x2="1" y2="1"><stop offset="0" stop-color="#8fd0ea"/><stop offset="1" stop-color="#2f86b4"/></linearGradient><linearGradient id="tbp" x1="0" y1="0" x2="1" y2="1"><stop offset="0" stop-color="#ffffff"/><stop offset="1" stop-color="#d4d4d4"/></linearGradient></defs><path d="M0.8 4.6 V22.4 A10.6 4 0 0 0 22 22.4 V4.6 Z" fill="url(#tbb)" stroke="#17587c" stroke-width="1"/><path d="M0.8 10.6 A10.6 4 0 0 0 22 10.6 M0.8 16.6 A10.6 4 0 0 0 22 16.6" fill="none" stroke="#17587c" stroke-width="0.9"/><ellipse cx="11.4" cy="4.6" rx="10.6" ry="3.8" fill="#9fd6ee" stroke="#17587c"/><circle cx="21.4" cy="21.4" r="7.4" fill="#fff" stroke="#222" stroke-width="1.6"/><path d="M21.4 16.8 V21.6 H24.6" fill="none" stroke="#222" stroke-width="1.3"/></svg>
<span style="position:absolute;left:802.2px;top:979.5px;font-size:11.8px;line-height:1;color:#4d4d4d;white-space:pre;transform-origin:0 0;transform:scaleX(0.958);">Iterations</span>
<svg style="position:absolute;left:895.8px;top:946px" width="29" height="28" viewBox="0 0 29 28"><path d="M3.4 3.4 V24.6 M3.4 18 C3.4 13 10 14 10 9.6" fill="none" stroke="#222" stroke-width="1.8"/><circle cx="3.4" cy="3.2" r="2.6" fill="#f4f4f4" stroke="#222" stroke-width="1.5"/><circle cx="3.4" cy="24.8" r="2.6" fill="#f4f4f4" stroke="#222" stroke-width="1.5"/><circle cx="10" cy="9.6" r="2.6" fill="#f4f4f4" stroke="#222" stroke-width="1.5"/><g stroke="#2f86b4" stroke-width="2.2"><path d="M10 3.4 H28"/><path d="M15 9.6 H28"/><path d="M12 15 H28"/><path d="M12 20.2 H28"/><path d="M10 25.2 H28"/></g></svg>
<span style="position:absolute;left:887.5px;top:979.7px;font-size:11.8px;line-height:1;color:#4d4d4d;white-space:pre;transform-origin:0 0;transform:scaleX(0.854);">Revisions</span>
<svg style="position:absolute;left:974.4px;top:946px" width="30" height="28" viewBox="0 0 30 28"><path d="M4 3.4 V24.6" stroke="#222" stroke-width="1.9"/><circle cx="4" cy="3.2" r="2.6" fill="#f4f4f4" stroke="#222" stroke-width="1.5"/><circle cx="4" cy="24.8" r="2.6" fill="#f4f4f4" stroke="#222" stroke-width="1.5"/><path d="M19.799999999999997 13.999999999999998 H25.0 V17.799999999999997 H28.799999999999997 V23.0 H25.0 V26.799999999999997 H19.799999999999997 V23.0 H15.999999999999998 V17.799999999999997 H19.799999999999997 Z" fill="#4fa3cc" stroke="#1d5f84" stroke-width="0.9"/></svg>
<span style="position:absolute;left:977.8px;top:979.7px;font-size:11.8px;line-height:1;color:#4d4d4d;white-space:pre;transform-origin:0 0;transform:scaleX(0.911);">New</span>
<span style="position:absolute;left:968.6px;top:992.8px;font-size:11.8px;line-height:1;color:#4d4d4d;white-space:pre;transform-origin:0 0;transform:scaleX(0.879);">Revision</span>
<svg style="position:absolute;left:1053.4px;top:946px" width="30" height="28" viewBox="0 0 30 28"><path d="M4 3.4 V24.6 M18 3.4 V14 H4" fill="none" stroke="#222" stroke-width="1.9"/><circle cx="4" cy="3.2" r="2.6" fill="#f4f4f4" stroke="#222" stroke-width="1.5"/><circle cx="4" cy="24.8" r="2.6" fill="#f4f4f4" stroke="#222" stroke-width="1.5"/><circle cx="18" cy="3.2" r="2.6" fill="#f4f4f4" stroke="#222" stroke-width="1.5"/><path d="M19.799999999999997 13.999999999999998 H25.0 V17.799999999999997 H28.799999999999997 V23.0 H25.0 V26.799999999999997 H19.799999999999997 V23.0 H15.999999999999998 V17.799999999999997 H19.799999999999997 Z" fill="#4fa3cc" stroke="#1d5f84" stroke-width="0.9"/></svg>
<span style="position:absolute;left:1056.8px;top:979.7px;font-size:11.8px;line-height:1;color:#4d4d4d;white-space:pre;transform-origin:0 0;transform:scaleX(0.919);">New</span>
<span style="position:absolute;left:1051.0px;top:992.8px;font-size:11.8px;line-height:1;color:#4d4d4d;white-space:pre;transform-origin:0 0;transform:scaleX(0.888);">Branch</span>
<svg style="position:absolute;left:1133.2px;top:946px" width="30" height="28" viewBox="0 0 30 28"><path d="M4 3.4 V24.6 M19 24.6 V14 H4" fill="none" stroke="#222" stroke-width="1.9"/><circle cx="4" cy="3.2" r="2.6" fill="#f4f4f4" stroke="#222" stroke-width="1.5"/><circle cx="4" cy="24.8" r="2.6" fill="#f4f4f4" stroke="#222" stroke-width="1.5"/><circle cx="19" cy="24.8" r="2.6" fill="#f4f4f4" stroke="#222" stroke-width="1.5"/><path d="M20.6 0.7999999999999998 H25.4 V4.199999999999999 H28.8 V9.0 H25.4 V12.399999999999999 H20.6 V9.0 H17.2 V4.199999999999999 H20.6 Z" fill="#4fa3cc" stroke="#1d5f84" stroke-width="0.9"/></svg>
<span style="position:absolute;left:1135.5px;top:979.7px;font-size:11.8px;line-height:1;color:#4d4d4d;white-space:pre;transform-origin:0 0;transform:scaleX(0.932);">New</span>
<span style="position:absolute;left:1113.3px;top:992.8px;font-size:11.8px;line-height:1;color:#4d4d4d;white-space:pre;transform-origin:0 0;transform:scaleX(0.883);">Revision From</span>
<svg style="position:absolute;left:1216.4px;top:946px" width="30" height="29" viewBox="0 0 30 29"><defs><linearGradient id="tbb" x1="0" y1="0" x2="1" y2="1"><stop offset="0" stop-color="#8fd0ea"/><stop offset="1" stop-color="#2f86b4"/></linearGradient><linearGradient id="tbp" x1="0" y1="0" x2="1" y2="1"><stop offset="0" stop-color="#ffffff"/><stop offset="1" stop-color="#d4d4d4"/></linearGradient></defs><rect x="0.7" y="0.7" width="13.6" height="13.2" fill="url(#tbb)" stroke="#1d5f84" stroke-width="1"/><rect x="15" y="14.4" width="13.6" height="13.2" fill="url(#tbb)" stroke="#1d5f84" stroke-width="1"/><path d="M17.4 2.4 L24.6 9.6" stroke="#222" stroke-width="2"/><path d="M27.6 12.4 V4.6 L20 12.2 Z" fill="#222"/></svg>
<span style="position:absolute;left:1207.5px;top:979.7px;font-size:11.8px;line-height:1;color:#4d4d4d;white-space:pre;transform-origin:0 0;transform:scaleX(0.931);">Duplicate</span>
<svg style="position:absolute;left:1295.4px;top:946px" width="30" height="28" viewBox="0 0 30 28"><path d="M8.6 3 V8 M2.6 13 V8 H14.6 V13 M21 17 V21 M15 25 V21 H27 V25" fill="none" stroke="#222" stroke-width="1"/><rect x="6.6" y="1" width="4" height="4" fill="#8fd0ea" stroke="#1d5f84" stroke-width="0.9"/><rect x="0.6000000000000001" y="12" width="4" height="4" fill="#8fd0ea" stroke="#1d5f84" stroke-width="0.9"/><rect x="6.6" y="12" width="4" height="4" fill="#8fd0ea" stroke="#1d5f84" stroke-width="0.9"/><rect x="12.6" y="12" width="4" height="4" fill="#8fd0ea" stroke="#1d5f84" stroke-width="0.9"/><rect x="19" y="14" width="4" height="4" fill="#8fd0ea" stroke="#1d5f84" stroke-width="0.9"/><rect x="13" y="24" width="4" height="4" fill="#8fd0ea" stroke="#1d5f84" stroke-width="0.9"/><rect x="25" y="24" width="4" height="4" fill="#8fd0ea" stroke="#1d5f84" stroke-width="0.9"/><path d="M14.6 2.6 L20 8" stroke="#222" stroke-width="1.6"/><path d="M22.4 10.4 V4.6 L16.6 10.4 Z" fill="#222"/></svg>
<span style="position:absolute;left:1286.5px;top:979.7px;font-size:11.8px;line-height:1;color:#4d4d4d;white-space:pre;transform-origin:0 0;transform:scaleX(0.931);">Duplicate</span>
<span style="position:absolute;left:1286.5px;top:992.8px;font-size:11.8px;line-height:1;color:#4d4d4d;white-space:pre;transform-origin:0 0;transform:scaleX(0.886);">Advanced</span>
<svg style="position:absolute;left:1380.6px;top:945.2px" width="27" height="30" viewBox="0 0 27 30"><defs><linearGradient id="tbb" x1="0" y1="0" x2="1" y2="1"><stop offset="0" stop-color="#8fd0ea"/><stop offset="1" stop-color="#2f86b4"/></linearGradient><linearGradient id="tbp" x1="0" y1="0" x2="1" y2="1"><stop offset="0" stop-color="#ffffff"/><stop offset="1" stop-color="#d4d4d4"/></linearGradient></defs><rect x="0.8" y="0.8" width="25" height="27.6" rx="1" fill="#e6e6e6" stroke="#444" stroke-width="1.3"/><g fill="url(#tbb)" stroke="#17587c" stroke-width="0.9"><rect x="4" y="4.4" width="6.4" height="4.6"/><rect x="4" y="12.4" width="6.4" height="4.6"/><rect x="4" y="20.4" width="6.4" height="4.6"/></g><g stroke="#666" stroke-width="1.3"><path d="M13 6.8 H23"/><path d="M13 14.8 H23"/><path d="M13 22.8 H23"/></g></svg>
<span style="position:absolute;left:1369.3px;top:979.7px;font-size:11.8px;line-height:1;color:#4d4d4d;white-space:pre;transform-origin:0 0;transform:scaleX(0.971);">Attributes</span>
<svg style="position:absolute;left:1458.6px;top:946.6px" width="29" height="25" viewBox="0 0 29 25"><rect x="0.6" y="0.6" width="14" height="16" fill="#f6f6f6" stroke="#333" stroke-width="1"/><g fill="#4fa3cc" stroke="#17587c" stroke-width="0.7"><rect x="2.6" y="2.8" width="3.6" height="2.6"/><rect x="2.6" y="7.4" width="3.6" height="2.6"/><rect x="2.6" y="12" width="3.6" height="2.6"/></g><path d="M8 4 H13 M8 8.6 H13 M8 13.2 H13" stroke="#333" stroke-width="1"/><path d="M25.4 18 C25.4 12 22 9 16 9" fill="none" stroke="#222" stroke-width="2.2"/><path d="M11.4 9 L17.4 4.6 V13.4 Z" fill="#222"/><rect x="15.6" y="20" width="4" height="3.4" fill="#4fa3cc" stroke="#17587c" stroke-width="0.7"/><path d="M21 21.8 H28" stroke="#222" stroke-width="1.3"/></svg>
<span style="position:absolute;left:1449.0px;top:979.7px;font-size:11.8px;line-height:1;color:#4d4d4d;white-space:pre;transform-origin:0 0;transform:scaleX(0.919);">Customer</span>
<span style="position:absolute;left:1449.0px;top:992.5px;font-size:11.8px;line-height:1;color:#4d4d4d;white-space:pre;transform-origin:0 0;transform:scaleX(0.907);">Extension</span>
<svg style="position:absolute;left:1540.6px;top:947.4px" width="24" height="25" viewBox="0 0 24 25"><path d="M1 8.6 L12 1 H23 V24 H1 Z" fill="#f2f2f2" stroke="#222" stroke-width="1"/><path d="M1 8.6 L12 1 L14 6 L5 12 Z" fill="#d9d9d9" stroke="#444" stroke-width="0.8"/><rect x="17.6" y="1" width="5.4" height="5.4" fill="#215f84"/><path d="M1 12.4 H23 M1 18.2 H23 M6.6 9 V24 M12 6.6 V24 M17.6 6.6 V24" stroke="#222" stroke-width="1"/><g fill="#4fa3cc"><rect x="7.6" y="13.4" width="3.4" height="3.8"/><rect x="13" y="13.4" width="3.6" height="3.8"/><rect x="2" y="19.2" width="3.6" height="3.8"/><rect x="18.6" y="19.2" width="3.4" height="3.8"/><rect x="13" y="8" width="3.6" height="3.4"/></g></svg>
<span style="position:absolute;left:1537.8px;top:979.7px;font-size:11.8px;line-height:1;color:#4d4d4d;white-space:pre;transform-origin:0 0;transform:scaleX(0.901);">Sheet</span>
<span style="position:absolute;left:1537.8px;top:992.5px;font-size:11.8px;line-height:1;color:#4d4d4d;white-space:pre;transform-origin:0 0;transform:scaleX(0.921);">Editor</span>
<svg style="position:absolute;left:1621.2px;top:945.2px" width="30" height="29" viewBox="0 0 30 29"><defs><linearGradient id="tbb" x1="0" y1="0" x2="1" y2="1"><stop offset="0" stop-color="#8fd0ea"/><stop offset="1" stop-color="#2f86b4"/></linearGradient><linearGradient id="tbp" x1="0" y1="0" x2="1" y2="1"><stop offset="0" stop-color="#ffffff"/><stop offset="1" stop-color="#d4d4d4"/></linearGradient></defs><path d="M2.6 4.4 L8 1.2 L13.6 3.4 V10.6 L8.4 14 L2.6 11.6 Z" fill="#f2f2f2" stroke="#555" stroke-width="0.9"/><path d="M2.6 4.4 L8.4 6.8 L13.6 3.4 M8.4 6.8 V14" fill="none" stroke="#555" stroke-width="0.8"/><path d="M7 8.6 L24.4 3.4 V22.6 L7 27.8 Z" fill="#6fb8dc" stroke="#17587c" stroke-width="1" opacity="0.92"/><path d="M15.4 14.4 L22 10.8 L28.6 13.4 V22 L22.4 26 L15.4 23 Z" fill="#f4f4f4" stroke="#444" stroke-width="0.9"/><path d="M19 14.4 L24 12 L28 13.8 V19.4 L23.6 22 L19 20 Z" fill="url(#tbb)" stroke="#17587c" stroke-width="0.9"/><path d="M19 14.4 L23.6 16.4 L28 13.8 M23.6 16.4 V22" fill="none" stroke="#17587c" stroke-width="0.8"/></svg>
<span style="position:absolute;left:1613.5px;top:979.7px;font-size:11.8px;line-height:1;color:#4d4d4d;white-space:pre;transform-origin:0 0;transform:scaleX(0.905);">Compare</span>
<span style="position:absolute;left:1613.4px;top:992.5px;font-size:11.8px;line-height:1;color:#4d4d4d;white-space:pre;transform-origin:0 0;transform:scaleX(0.936);">Structure</span>
<svg style="position:absolute;left:1701.2px;top:947.4px" width="28" height="25" viewBox="0 0 28 25"><defs><linearGradient id="tbb" x1="0" y1="0" x2="1" y2="1"><stop offset="0" stop-color="#8fd0ea"/><stop offset="1" stop-color="#2f86b4"/></linearGradient><linearGradient id="tbp" x1="0" y1="0" x2="1" y2="1"><stop offset="0" stop-color="#ffffff"/><stop offset="1" stop-color="#d4d4d4"/></linearGradient></defs><path d="M9.4 10 V15 M4.6 19 V15 H14.2 V19 M19 6.4 H22.6 M22.6 11 V17" fill="none" stroke="#222" stroke-width="1"/><circle cx="9.4" cy="5.6" r="4.8" fill="url(#tbb)" stroke="#17587c"/><circle cx="4.6" cy="20.4" r="3.2" fill="url(#tbb)" stroke="#17587c"/><circle cx="14.2" cy="20.4" r="3.2" fill="url(#tbb)" stroke="#17587c"/><rect x="19.6" y="3" width="7" height="8" rx="1" fill="#fff" stroke="#222" stroke-width="1"/><rect x="20.6" y="17" width="5.4" height="6.4" rx="1" fill="#fff" stroke="#222" stroke-width="1"/></svg>
<span style="position:absolute;left:1692.6px;top:979.7px;font-size:11.8px;line-height:1;color:#4d4d4d;white-space:pre;transform-origin:0 0;transform:scaleX(0.905);">Compare</span>
<span style="position:absolute;left:1687.2px;top:992.5px;font-size:11.8px;line-height:1;color:#4d4d4d;white-space:pre;transform-origin:0 0;transform:scaleX(0.912);">with EBOM</span>
<svg style="position:absolute;left:1782.8px;top:944.6px" width="23" height="29" viewBox="0 0 23 29"><defs><linearGradient id="tdg" x1="0" y1="0" x2="1" y2="0"><stop offset="0" stop-color="#bdbdbd"/><stop offset="0.4" stop-color="#fafafa"/><stop offset="1" stop-color="#a9a9a9"/></linearGradient></defs><path d="M2.6 8 L4.4 26 Q11.4 29.6 18.4 26 L20.2 8 Z" fill="url(#tdg)" stroke="#666" stroke-width="1"/><path d="M7 10.6 L7.8 25.6 M11.4 10.8 V26.4 M15.8 10.6 L15 25.6" stroke="#8a8a8a" stroke-width="1.5"/><ellipse cx="11.4" cy="6.6" rx="10.4" ry="3.8" fill="#ededed" stroke="#666"/><path d="M7.6 4 Q11.4 -0.6 15.2 4" fill="none" stroke="#666" stroke-width="1.4"/></svg>
<span style="position:absolute;left:1777.1px;top:979.7px;font-size:11.8px;line-height:1;color:#4d4d4d;white-space:pre;transform-origin:0 0;transform:scaleX(0.956);">Delete</span>
<div style="position:absolute;left:1565.6px;top:1017.5px;width:298.8px;height:20px;background:#fff;border-top:1px solid #7a7a7a;border-left:1px solid #7a7a7a;"></div>
<div style="position:absolute;left:1866.6px;top:1017.5px;width:18.6px;height:20px;background:#f4f4f4;border:1px solid #d0d0d0;"></div>
<svg style="position:absolute;left:1869.6px;top:1021px" width="14" height="13" viewBox="0 0 14 13"><rect x="0.6" y="0.6" width="8" height="6.6" fill="none" stroke="#b3b3b3"/><rect x="9.4" y="9.4" width="4" height="1.8" fill="none" stroke="#b3b3b3" stroke-width="0.8"/></svg>
<svg style="position:absolute;left:1888px;top:1017px" width="24" height="21" viewBox="0 0 24 21"><defs><linearGradient id="wg" x1="0" y1="0" x2="0" y2="1"><stop offset="0" stop-color="#fdd98a"/><stop offset="1" stop-color="#f29a13"/></linearGradient></defs><path d="M12.6 1.4 L24.6 20.6 H1 Z" fill="url(#wg)" stroke="#e08a0a" stroke-width="1.2" stroke-linejoin="round"/><path d="M12.8 7 V15" stroke="#fff" stroke-width="2.2"/></svg>
<!-- header -->
<div style="position:absolute;left:0px;top:0px;width:1911px;height:23px;background:#fff;"></div>
<svg style="position:absolute;left:-3px;top:2.6px" width="17" height="17" viewBox="0 0 17 17"><defs><radialGradient id="tbi" cx="0.5" cy="0.3" r="0.8"><stop offset="0" stop-color="#2f7fc0"/><stop offset="0.6" stop-color="#0d4a86"/><stop offset="1" stop-color="#072a55"/></radialGradient></defs><circle cx="8.4" cy="8.5" r="8.2" fill="url(#tbi)"/><path d="M7.2 6.6 L10.8 8.5 L7.2 10.4 Z" fill="none" stroke="#e8f2fb" stroke-width="0.9"/><ellipse cx="8.6" cy="3" rx="1.4" ry="1" fill="#cfe3f5"/><ellipse cx="8.6" cy="14" rx="1.8" ry="1.1" fill="#cfe3f5"/><circle cx="3.4" cy="8.6" r="0.9" fill="#cfe3f5"/><circle cx="13.6" cy="8.6" r="0.9" fill="#cfe3f5"/><circle cx="5" cy="5" r="0.6" fill="#9cc3e6"/><circle cx="12.2" cy="5" r="0.6" fill="#9cc3e6"/></svg>
<span style="position:absolute;left:18.4px;top:5.8px;font-size:12.6px;line-height:1;color:#000;white-space:pre;transform-origin:0 0;transform:scaleX(0.805);">3DEXPERIENCE</span>
<svg style="position:absolute;left:1780px;top:0" width="131" height="23" viewBox="0 0 131 23"><path d="M14 10.5 H24" stroke="#000" stroke-width="1"/><path d="M59.5 7.5 H66.5 V14.5 H59.5 Z M61.5 7.5 V5.5 H68.5 V12.5 H66.5" fill="none" stroke="#000" stroke-width="1"/><path d="M105 5 L115 15 M115 5 L105 15" stroke="#000" stroke-width="1.1"/></svg>
<div style="position:absolute;left:0px;top:23px;width:1911px;height:43px;background:#005686;"></div>
<svg style="position:absolute;left:8px;top:27px" width="36" height="36" viewBox="0 0 36 36"><g fill="#fff">
<path d="M12 3.6 C17 1.4 24.6 1.2 25.2 4.8 C25.7 7.8 21.5 11.2 16.4 13.6 L15 12.4 C19 10.4 22 7.8 21.5 5.8 C21 4 16.4 3.8 12.8 4.8 Z"/>
<path d="M13.8 14.4 L17.2 14.4 L9 30.2 C13.5 29.2 19 25.7 19.5 21.2 C19.8 18.4 16.5 16.8 12.8 17.4 L13.3 16 C18.5 15.4 23.1 17.4 22.7 21.4 C22.1 27.2 11.5 32.8 2.2 32.6 Z"/>
<path d="M34 15.4 C29.5 14.6 24.6 15.4 24.3 18.2 C24 21 29.8 21.8 29.4 24.4 C29.1 26.6 24.8 27.6 21 26.8 L20.6 28.4 C25.8 29.4 32.4 28.2 32.8 24.4 C33.2 20.8 27.4 20.4 27.7 18.2 C27.9 16.6 30.8 16.4 33.4 17 Z"/>
</g></svg>
<span style="position:absolute;left:139.4px;top:37.6px;font-size:15.5px;line-height:1;color:#fff;white-space:pre;transform-origin:0 0;transform:scaleX(1.009);font-weight:bold;">3D</span>
<span style="position:absolute;left:159.6px;top:37.6px;font-size:15.5px;line-height:1;color:#fff;white-space:pre;transform-origin:0 0;transform:scaleX(0.907);">EXPERIENCE</span>
<div style="position:absolute;left:257px;top:37.5px;width:1.4px;height:16px;background:#fff;"></div>
<span style="position:absolute;left:265.0px;top:37.6px;font-size:15.5px;line-height:1;color:#fff;white-space:pre;transform-origin:0 0;transform:scaleX(0.951);font-weight:bold;">ENOVIA</span>
<span style="position:absolute;left:327.3px;top:38.3px;font-size:14.6px;line-height:1;color:#e4eef5;white-space:pre;transform-origin:0 0;transform:scaleX(0.956);">Collaborative Lifecycle</span>
<div style="position:absolute;left:686px;top:30px;width:350px;height:31px;background:#fff;border-radius:2px;"></div>
<span style="position:absolute;left:695.0px;top:39.6px;font-size:13.5px;line-height:1;color:#9a9a9a;white-space:pre;transform-origin:0 0;transform:scaleX(0.921);">Search</span>
<svg style="position:absolute;left:1006px;top:36px" width="22" height="22" viewBox="0 0 22 22"><circle cx="9.3" cy="8.8" r="5.4" fill="none" stroke="#333" stroke-width="2"/><path d="M13.6 13.2 L19 18.4" stroke="#333" stroke-width="2.8" stroke-linecap="round"/></svg>
<svg style="position:absolute;left:1044px;top:32px" width="28" height="26" viewBox="0 0 28 26"><path d="M3.2 3.4 L10.8 2.6 L24.4 13.6 L17.6 22.6 L4 11.6 Z" fill="none" stroke="#fff" stroke-width="1.9" stroke-linejoin="round"/><circle cx="7.6" cy="7" r="1.6" fill="#fff"/></svg>
<span style="position:absolute;left:1644.7px;top:29.1px;font-size:11px;line-height:1;color:#b9d0e0;white-space:pre;transform-origin:0 0;transform:scaleX(0.985);">Fernando Petre</span>
<span style="position:absolute;left:1600.6px;top:45.4px;font-size:17px;line-height:1;color:#fff;white-space:pre;transform-origin:0 0;transform:scaleX(0.956);">IAR 80 Fly Again</span>
<svg style="position:absolute;left:1726px;top:49px" width="12" height="9" viewBox="0 0 12 9"><path d="M1.6 2 L6 6 L10.4 2" fill="none" stroke="#fff" stroke-width="2"/></svg>
<div style="position:absolute;left:1747.7px;top:32px;width:25.6px;height:25.6px;background:#ef63a2;border-radius:13px;"></div>
<span style="position:absolute;left:1753.5px;top:40.3px;font-size:9.5px;line-height:1;color:#fff;white-space:pre;transform-origin:0 0;transform:scaleX(1.071);">FP</span>
<div style="position:absolute;left:1768px;top:31.4px;width:14px;height:14px;background:#b7babf;border-radius:7px;"></div>
<div style="position:absolute;left:1773px;top:36.4px;width:4px;height:4px;background:#fff;border-radius:2px;"></div>
<svg style="position:absolute;left:1794px;top:35px" width="22" height="22" viewBox="0 0 22 22"><path d="M10.6 1.2 V20.2 M1.1 10.7 H20.1" stroke="#fff" stroke-width="3"/></svg>
<svg style="position:absolute;left:1836px;top:33px" width="26" height="26" viewBox="0 0 26 26"><path d="M2.6 21.6 C3.4 13 8.6 8.6 15 8.6 V3.2 L24 10.8 L15 18.4 V13.2 C9.4 13.2 5.6 15.6 2.6 21.6 Z" fill="none" stroke="#fff" stroke-width="2" stroke-linejoin="round"/></svg>
<svg style="position:absolute;left:1880px;top:33px" width="26" height="26" viewBox="0 0 26 26"><circle cx="12.6" cy="12.7" r="10.5" fill="none" stroke="#fff" stroke-width="2"/><path d="M8.9 9.8 C8.9 7.1 10.6 5.8 12.8 5.8 C15.2 5.8 16.6 7.3 16.6 9.2 C16.6 12 12.8 12 12.8 15.4" fill="none" stroke="#fff" stroke-width="2.3"/><circle cx="12.8" cy="18.8" r="1.5" fill="#fff"/></svg>
<div style="position:absolute;left:0px;top:66px;width:1911px;height:32px;background:#f4f6f8;"></div>
<div style="position:absolute;left:0px;top:97px;width:1911px;height:1.6px;background:#54708a;"></div>
<span style="position:absolute;left:146.3px;top:74.0px;font-size:14.2px;line-height:1;color:#6e6e6e;white-space:pre;transform-origin:0 0;transform:scaleX(0.979);font-style:italic;">FA-55-10-00 A.1 (Explore)</span>
<span style="position:absolute;left:352.8px;top:74.0px;font-size:14.2px;line-height:1;color:#3c3c3c;white-space:pre;transform-origin:0 0;transform:scaleX(1.021);font-weight:bold;font-style:italic;">FA-55-10-00 A.1</span>
<div style="position:absolute;left:317px;top:94px;width:178px;height:3px;background:#3d7fb3;"></div>
<svg style="position:absolute;left:501px;top:75px" width="12" height="12" viewBox="0 0 12 12"><path d="M6 1 V11 M1 6 H11" stroke="#a4a4a4" stroke-width="1.3"/></svg>
<div style="position:absolute;left:1881px;top:70px;width:24px;height:24px;background:#fff;border:1px solid #2a6496;border-radius:2px;"></div>
<svg style="position:absolute;left:1881px;top:70px" width="24" height="24" viewBox="0 0 24 24"><g fill="#1f5f8f"><path d="M13 11 V5.8 L14.8 7.6 L18.6 3.8 L20.2 5.4 L16.4 9.2 L18.2 11 Z"/><path d="M11 13 V18.2 L9.2 16.4 L5.4 20.2 L3.8 18.6 L7.6 14.8 L5.8 13 Z"/></g></svg>
<svg style="position:absolute;left:52px;top:20px" width="80" height="80" viewBox="0 0 80 80">
<defs><radialGradient id="cg1" cx="0.5" cy="0.35" r="0.75"><stop offset="0" stop-color="#0a5a8e"/><stop offset="1" stop-color="#02355a"/></radialGradient>
<linearGradient id="cg2" x1="0" y1="0" x2="0" y2="1"><stop offset="0" stop-color="#6ea4cb"/><stop offset="1" stop-color="#3b7aa8"/></linearGradient></defs>
<circle cx="40" cy="39.8" r="35.6" fill="#0a5b8d"/>
<circle cx="40" cy="39.8" r="35.6" fill="none" stroke="#04466f" stroke-width="1"/>
<circle cx="40" cy="40" r="31.6" fill="url(#cg1)"/>
<path d="M17 28 C17 14 28 8.6 40 8.6 C52 8.6 63 14 63 28 C63 33 60 36 56 37.4 C52 30 46 27 40 27 C34 27 28 30 24 37.4 C20 36 17 33 17 28 Z" fill="url(#cg2)" opacity="0.92"/>
<circle cx="40" cy="40" r="13.6" fill="#0a5d92" stroke="#2b86be" stroke-width="1.2"/>
<path d="M35.6 33 L48 39.6 L35.6 46.2 Z" fill="none" stroke="#fff" stroke-width="1.7" stroke-linejoin="round"/>
<g stroke="#2e86bd" stroke-width="0.9"><path d="M20 20 L27.6 26"/><path d="M60 20 L52.4 26"/><path d="M20 59 L27.6 52.4"/><path d="M60 59 L52.4 52.4"/></g>
</svg>
<span style="position:absolute;left:64.6px;top:54.5px;font-size:10.5px;line-height:1;color:#fff;white-space:pre;transform-origin:0 0;transform:scaleX(0.790);font-weight:bold;">3D</span>
<span style="position:absolute;left:85.6px;top:74.5px;font-size:10.5px;line-height:1;color:#fff;white-space:pre;transform-origin:0 0;transform:scaleX(0.822);font-weight:bold;">V.R</span>
<span style="position:absolute;left:87.6px;top:31.5px;font-size:10px;line-height:1;color:#fff;white-space:pre;transform-origin:0 0;transform:scaleX(0.900);font-weight:bold;font-style:italic;">Y</span>
<span style="position:absolute;left:93.4px;top:34.2px;font-size:8px;line-height:1;color:#fff;white-space:pre;transform-origin:0 0;transform:scaleX(1.156);font-weight:bold;font-style:italic;">r</span>
<span style="position:absolute;left:110.0px;top:53.1px;font-size:11px;line-height:1;color:#fff;white-space:pre;transform-origin:0 0;transform:scaleX(1.113);font-weight:bold;">i</span>
<span style="position:absolute;left:113.6px;top:51.1px;font-size:7px;line-height:1;color:#fff;white-space:pre;transform-origin:0 0;transform:scaleX(1.287);font-weight:bold;font-style:italic;">f</span>
</div>
</body></html>
